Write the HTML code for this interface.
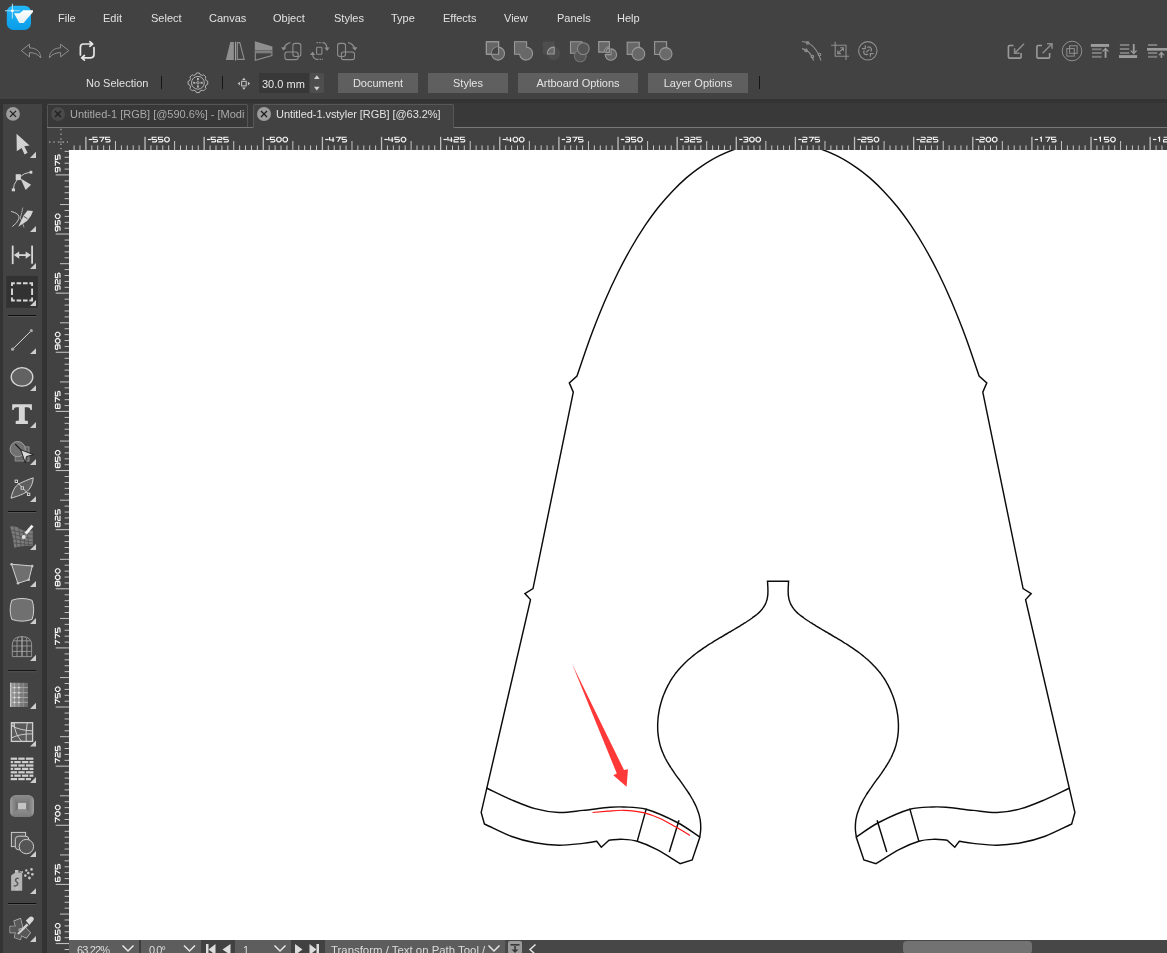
<!DOCTYPE html>
<html><head><meta charset="utf-8">
<style>
*{margin:0;padding:0;box-sizing:border-box}
html,body{width:1167px;height:953px;overflow:hidden;background:#424242;font-family:"Liberation Sans",sans-serif;color:#dedede}
.a{position:absolute}
.m{will-change:transform;position:absolute;top:11px;font-size:11px;line-height:14px;color:#e2e2e2;white-space:nowrap}
.btn{will-change:transform;position:absolute;top:73px;height:20px;background:#5f5f5f;color:#e4e4e4;font-size:11px;line-height:20px;text-align:center;white-space:nowrap}
.sep{position:absolute;top:76px;width:1px;height:13px;background:#151515}
svg{position:absolute;overflow:visible}
</style></head><body>
<!-- menu -->
<div class="a" style="left:0;top:0;width:1167px;height:99px;background:#424242"></div>
<div class="m" style="left:58px">File</div>
<div class="m" style="left:103px">Edit</div>
<div class="m" style="left:151px">Select</div>
<div class="m" style="left:209px">Canvas</div>
<div class="m" style="left:273px">Object</div>
<div class="m" style="left:334px">Styles</div>
<div class="m" style="left:391px">Type</div>
<div class="m" style="left:443px">Effects</div>
<div class="m" style="left:504px">View</div>
<div class="m" style="left:557px">Panels</div>
<div class="m" style="left:617px">Help</div>

<!-- control bar -->
<div class="m" style="left:86px;top:76px">No Selection</div>
<div class="sep" style="left:161px"></div>
<div class="sep" style="left:222px"></div>
<div class="a" style="left:259px;top:73px;width:50px;height:20px;background:#383838"></div>
<div class="m" style="left:262px;top:77px;color:#e6e6e6">30.0 mm</div>
<div class="a" style="left:310px;top:73px;width:14px;height:20px;background:#4e4e4e;border-radius:2px"></div>
<div class="btn" style="left:338px;width:80px">Document</div>
<div class="btn" style="left:428px;width:80px">Styles</div>
<div class="btn" style="left:518px;width:120px">Artboard Options</div>
<div class="btn" style="left:648px;width:100px">Layer Options</div>
<div class="sep" style="left:759px"></div>

<svg class="a" style="left:0;top:0" width="1167" height="100" viewBox="0 0 1167 100">
<!-- logo -->
<defs>
 <linearGradient id="lg1" x1="0" y1="0" x2="0" y2="1"><stop offset="0" stop-color="#22b8fb"/><stop offset="1" stop-color="#0a9ce8"/></linearGradient>
 <linearGradient id="lg2" x1="0" y1="0" x2="0" y2="1"><stop offset="0" stop-color="#ffffff"/><stop offset="1" stop-color="#e4eef4"/></linearGradient>
</defs>
<rect x="6.8" y="5.7" width="24.2" height="24.3" rx="6.5" fill="url(#lg1)"/>
<path d="M14,13.2 L19.6,13.2 L23.2,10.2 L33,10.2 L33,12 L23.5,23 L19.3,23 Z" fill="url(#lg2)"/>
<path d="M12.4,3.8 L12.4,18.6 M5,10.8 L19.8,10.8" stroke="#a8dcf5" stroke-width="1.1"/>
<circle cx="12.4" cy="10.8" r="1.4" fill="#fff"/>
<!-- undo/redo -->
<g fill="none" stroke="#8e8e8e" stroke-width="1" stroke-linejoin="round">
 <path d="M21.3,50.6 L29.5,44.2 L29.5,47.9 C35.5,47.9 40.5,51 40.8,58 C38.5,54.5 34.5,52.6 29.5,52.6 L29.5,56.9 Z"/>
 <path d="M68.8,50.6 L60.6,44.2 L60.6,47.9 C54.6,47.9 49.6,51 49.3,58 C51.6,54.5 55.6,52.6 60.6,52.6 L60.6,56.9 Z"/>
</g>
<g fill="none" stroke="#e6e6e6" stroke-width="1.7" stroke-linecap="round" stroke-linejoin="round">
 <path d="M80.4,55 L80.4,47.2 Q80.4,44 83.6,44 L92.6,44 M89.8,41.7 L92.6,44 L89.8,46.3"/>
 <path d="M94,47.5 L94,54.6 Q94,57.8 90.8,57.8 L81.6,57.8 M84.4,55.5 L81.6,57.8 L84.4,60.1"/>
</g>
<!-- flip group -->
<g fill="#8f8f8f">
 <path d="M225.8,59.9 L230.3,42.1 L233.9,42.1 L233.9,59.9 Z"/>
 <rect x="235" y="41.8" width="1.1" height="18.8" fill="#a0a0a0"/>
 <path d="M254.8,41.2 L272.4,46.4 L272.4,50 L254.8,50 Z"/>
 <rect x="254.6" y="50.6" width="18" height="1.1" fill="#a0a0a0"/>
</g>
<g fill="none" stroke="#8f8f8f" stroke-width="1.1">
 <path d="M237.3,42.6 L239.8,42.6 L244.2,59.4 L237.3,59.4 Z"/>
 <path d="M255.3,52.8 L271.9,52.8 L271.9,55.5 L255.3,60.2 Z"/>
 <rect x="292.9" y="43.4" width="7.9" height="13.1" rx="2.2"/>
 <rect x="284.9" y="52" width="13.2" height="7.6" rx="2.2"/>
 <path d="M290.5,42.6 Q286,43.3 283.8,48.2"/>
 <rect x="316.6" y="47.2" width="5.3" height="7.1" rx="0.8"/>
 <path d="M316.5,42.6 L322.5,42.6" stroke-dasharray="1.6,1"/>
 <path d="M323,42.6 Q326.5,43 327,48"/>
 <path d="M317,59.4 L323,59.4" stroke-dasharray="1.6,1"/>
 <path d="M317,59.4 Q313,59 312.6,54.5"/>
 <rect x="337.6" y="43.4" width="7.9" height="13.1" rx="2.2"/>
 <rect x="341.3" y="52" width="13.2" height="7.6" rx="2.2"/>
 <path d="M348,42.6 Q352.5,43.3 354.8,48.2"/>
</g>
<g fill="#8f8f8f">
 <path d="M281.2,47.2 L286.6,47.6 L283.4,50.6 Z"/>
 <path d="M324.4,47.6 L329.6,47.6 L327,51 Z"/>
 <path d="M310,55 L315.2,55 L312.6,51.6 Z"/>
 <path d="M352,47.6 L357.4,47.2 L355.2,50.6 Z"/>
</g>
<!-- boolean group -->
<g stroke="#9a9a9a" stroke-width="1.1">
 <!-- 1 xor -->
 <path d="M486.4,41.7 L498.6,41.7 L498.6,54.2 L486.4,54.2 Z" fill="#656565"/>
 <circle cx="498" cy="53.6" r="6.5" fill="#656565"/>
 <path d="M491.6,54.2 A6.5,6.5 0 0 1 498.6,47.1 L498.6,54.2 Z" fill="#454545" stroke="none"/>
 <path d="M486.4,41.7 L498.6,41.7 L498.6,54.2 L486.4,54.2 Z" fill="none"/>
 <!-- 2 union -->
 <path d="M514.5,41.7 L526.6,41.7 L526.6,47.1 A6.5,6.5 0 1 1 519.6,54.2 L514.5,54.2 Z" fill="#686868"/>
 <!-- 3 intersect -->
 <rect x="542.8" y="41.5" width="11.8" height="12.8" fill="#4e4e4e" stroke="none"/>
 <circle cx="553.8" cy="53.6" r="6.6" fill="#4c4c4c" stroke="none"/>
 <path d="M547.3,54 A6.5,6.5 0 0 1 554.2,47.1 L554.2,54 Z" fill="#666"/>
 <!-- 4 -->
 <path d="M570.5,41.7 L582,41.7 L582,53.2 L570.5,53.2 Z" fill="#686868"/>
 <circle cx="580.3" cy="55.9" r="5.9" fill="#555" stroke="#747474"/>
 <circle cx="583.3" cy="48.6" r="5.9" fill="#555" stroke="#8a8a8a"/>
 <!-- 5 -->
 <path d="M598.7,41.6 L609.4,41.6 L609.4,46.5 A5.6,5.6 0 0 0 604.3,52.1 L598.7,52.1 Z" fill="#686868"/>
 <path d="M605.8,52.6 A5,5 0 0 1 609.4,47.6 L609.4,52.6 Z" fill="#666"/>
 <path d="M611,48.9 A5.7,5.7 0 1 1 605.2,54.6 L611,54.6 Z" fill="#666"/>
 <!-- 6 -->
 <rect x="627.2" y="42.2" width="12.1" height="12.2" fill="#686868"/>
 <circle cx="638.4" cy="53.8" r="6.4" fill="#686868"/>
 <!-- 7 -->
 <rect x="654.6" y="41.7" width="12" height="12.7" fill="#555"/>
 <circle cx="665.8" cy="53.8" r="6.2" fill="#6a6a6a"/>
</g>
<!-- right group a,b,c -->
<g fill="none" stroke="#8f8f8f" stroke-width="1.1">
 <path d="M802,41.5 Q815,42.5 821,60.5"/>
 <path d="M802,48.6 Q810,50 813.6,60.5"/>
 <circle cx="807.6" cy="42.8" r="1.3"/><circle cx="819.5" cy="54.5" r="1.3"/>
 <circle cx="806" cy="50.4" r="1.3"/><circle cx="812.4" cy="56.5" r="1.3"/>
 <path d="M831.2,45.2 L835.2,45.2 L835.2,41.8 M835.2,45 L835.2,56.2 L849,56.2 M846,56.2 L846,60 M835.2,45.2 L846,45.2 L846,56"/>
 <path d="M837.8,53.6 L843.4,47.8 M840.2,47.8 L843.4,47.8 L843.4,51 M837.8,50.4 L837.8,53.6 L841,53.6"/>
 <circle cx="867.8" cy="50.8" r="9.2"/>
 <path d="M865.3,45.3 L865.3,48.6 L862,48.6 M873.6,53.6 L870.4,53.6 L870.4,56.8" stroke-width="1.2"/>
 <path d="M867.2,47.6 A2.5,2.5 0 1 1 870.6,51.4" stroke-width="1.2"/>
 <path d="M864.4,50.4 A2.5,2.5 0 1 0 868.2,53.8" stroke-width="1.2"/>
 <path d="M866.2,52.2 L869.4,49.4" stroke-width="1.2"/>
</g>
<!-- far right group -->
<g fill="none" stroke="#9a9a9a" stroke-width="1.6">
 <path d="M1013.5,45.5 L1009.6,45.5 Q1008.4,45.5 1008.4,46.7 L1008.4,56.9 Q1008.4,58.1 1009.6,58.1 L1019.9,58.1 Q1021.1,58.1 1021.1,56.9 L1021.1,53"/>
 <path d="M1024,43.8 L1014.6,53.2 M1014.6,48.2 L1014.6,53.2 L1019.6,53.2" stroke="#8a8a8a"/>
 <path d="M1042,45.5 L1038.1,45.5 Q1036.9,45.5 1036.9,46.7 L1036.9,56.9 Q1036.9,58.1 1038.1,58.1 L1048.4,58.1 Q1049.6,58.1 1049.6,56.9 L1049.6,53"/>
 <path d="M1042.6,53.2 L1052,43.8 M1047,43.8 L1052,43.8 L1052,48.8" stroke="#8a8a8a"/>
</g>
<g fill="none" stroke="#8f8f8f" stroke-width="1">
 <circle cx="1072" cy="51" r="9.8"/>
 <rect x="1069.6" y="45.8" width="7.5" height="7.5"/>
 <rect x="1066.8" y="48.6" width="7.5" height="7.5"/>
</g>
<g fill="#8f8f8f">
 <rect x="1090.8" y="44" width="18.3" height="2.9" fill="#9c9c9c"/>
 <rect x="1091.9" y="48.3" width="9.7" height="2" fill="#7c7c7c"/><rect x="1091.9" y="52" width="9.7" height="2" fill="#7c7c7c"/><rect x="1091.9" y="55.8" width="9.7" height="2" fill="#7c7c7c"/>
 <rect x="1104.6" y="49" width="1.9" height="8.8" fill="#9c9c9c"/><path d="M1101.8,51.4 L1105.5,47.4 L1109.2,51.4 L1107.6,51.4 L1105.5,49.4 L1103.4,51.4 Z" fill="#9c9c9c"/>
 <rect x="1119.9" y="44" width="9.4" height="2" fill="#7c7c7c"/><rect x="1119.9" y="48" width="9.4" height="2" fill="#7c7c7c"/><rect x="1119.9" y="52" width="9.4" height="2" fill="#7c7c7c"/>
 <rect x="1119" y="55.1" width="18.1" height="2.9" fill="#9c9c9c"/>
 <rect x="1132.8" y="44" width="1.9" height="8.5" fill="#9c9c9c"/><path d="M1130,50.4 L1133.7,54.4 L1137.4,50.4 L1135.8,50.4 L1133.7,52.4 L1131.6,50.4 Z" fill="#9c9c9c"/>
 <rect x="1148" y="44" width="9.2" height="2" fill="#7c7c7c"/>
 <rect x="1147" y="48" width="20" height="2.7" fill="#9c9c9c"/>
 <rect x="1148" y="52" width="9.2" height="2" fill="#7c7c7c"/><rect x="1148" y="55.8" width="9.2" height="2" fill="#7c7c7c"/>
 <rect x="1160.5" y="52.5" width="1.8" height="5.3" fill="#9c9c9c"/><path d="M1158.2,55.2 L1161.4,51.4 L1164.8,55.2 L1163.2,55.2 L1161.4,53.4 L1159.8,55.2 Z" fill="#9c9c9c"/>
</g>
<!-- control bar icons -->
<g fill="none" stroke="#b4b4b4" stroke-width="1">
 <path d="M206.1,80.6 L207.7,81.3 L207.7,84.3 L206.1,85.0 L205.3,87.0 L205.9,88.6 L203.7,90.8 L202.2,90.2 L200.1,91.0 L199.4,92.6 L196.4,92.6 L195.7,91.0 L193.7,90.2 L192.1,90.8 L189.9,88.6 L190.5,87.0 L189.7,85.0 L188.1,84.3 L188.1,81.3 L189.7,80.6 L190.5,78.5 L189.9,77.0 L192.1,74.8 L193.7,75.4 L195.7,74.6 L196.4,73.0 L199.4,73.0 L200.1,74.6 L202.2,75.4 L203.7,74.8 L205.9,77.0 L205.3,78.5 Z" stroke-linejoin="round"/>
 <circle cx="197.9" cy="82.8" r="6.4"/>
 <circle cx="197.9" cy="82.8" r="1.2"/>
</g>
<g fill="#b8b8b8">
 <rect x="197" y="78" width="1.8" height="2.2"/><rect x="197" y="85.4" width="1.8" height="2.2"/>
 <rect x="193.1" y="81.9" width="2.2" height="1.8"/><rect x="200.5" y="81.9" width="2.2" height="1.8"/>
</g>
<g fill="none" stroke="#bdbdbd" stroke-width="1.1"><rect x="241.6" y="81.3" width="4.6" height="4.6"/></g>
<g fill="#c8c8c8">
 <path d="M243.9,77.8 L242.1,79.9 L245.7,79.9 Z"/><path d="M243.9,89.8 L242.1,87.4 L245.7,87.4 Z"/>
 <path d="M237.7,83.6 L239.9,81.8 L239.9,85.4 Z"/><path d="M250.1,83.6 L247.9,81.8 L247.9,85.4 Z"/>
</g>
<g fill="#d2d2d2">
 <path d="M316.8,75.3 L314,79 L319.6,79 Z"/><path d="M316.8,90.5 L314,86.8 L319.6,86.8 Z"/>
</g>
</svg>

<!-- dark band & frames -->
<div class="a" style="left:0;top:99px;width:1167px;height:5px;background:#333"></div>
<div class="a" style="left:0;top:99px;width:3px;height:854px;background:#333"></div>
<div class="a" style="left:3px;top:104px;width:39px;height:849px;background:#434343"></div>
<div class="a" style="left:42px;top:99px;width:5px;height:854px;background:#333"></div>

<svg class="a" style="left:0;top:0" width="45" height="953" viewBox="0 0 45 953">
<defs>
 <radialGradient id="gm" cx="0.5" cy="0.5" r="0.7"><stop offset="0" stop-color="#9a9a9a"/><stop offset="1" stop-color="#7a7a7a"/></radialGradient>
 <pattern id="gmp" x="10.1" y="682.6" width="4.5" height="4.8" patternUnits="userSpaceOnUse"><rect width="4.5" height="4.8" fill="#858585"/><circle cx="2.2" cy="2.4" r="1.3" fill="#b2b2b2"/></pattern>
 <linearGradient id="bev" x1="0" y1="0" x2="1" y2="1"><stop offset="0" stop-color="#8c8c8c"/><stop offset="0.5" stop-color="#6c6c6c"/><stop offset="1" stop-color="#8a8a8a"/></linearGradient>
</defs>
<!-- close button -->
<circle cx="13" cy="113.9" r="6.9" fill="#9c9c9c"/>
<path d="M10,110.9 L16,116.9 M16,110.9 L10,116.9" stroke="#1e1e1e" stroke-width="1.3"/>
<!-- active tool bg -->
<rect x="6.3" y="275.9" width="31.5" height="31.9" fill="#323232"/>
<!-- separators -->
<g><rect x="8" y="315" width="28.2" height="1.1" fill="#0e0e0e"/><rect x="8" y="316.1" width="28.2" height="0.9" fill="#5a5a5a"/>
<rect x="8" y="511" width="28.2" height="1.1" fill="#0e0e0e"/><rect x="8" y="512.1" width="28.2" height="0.9" fill="#5a5a5a"/>
<rect x="8" y="670.2" width="28.2" height="1.1" fill="#0e0e0e"/><rect x="8" y="671.3" width="28.2" height="0.9" fill="#5a5a5a"/>
<rect x="8" y="903" width="28.2" height="1.1" fill="#0e0e0e"/><rect x="8" y="904.1" width="28.2" height="0.9" fill="#5a5a5a"/></g>
<!-- submenu triangles -->
<g fill="#cdcdcd">
 <path d="M36,151.8 L36,157.9 L29.9,157.9 Z"/>
 <path d="M36,226 L36,232 L30,232 Z"/>
 <path d="M36,263 L36,269 L30,269 Z"/>
 <path d="M36,299.9 L36,306 L30,306 Z"/>
 <path d="M36,348.2 L36,354.1 L30,354.1 Z"/>
 <path d="M36,385.2 L36,391 L30,391 Z"/>
 <path d="M36,422 L36,428 L30,428 Z"/>
 <path d="M36,459 L36,465 L30,465 Z"/>
 <path d="M36,496.3 L36,502 L30,502 Z"/>
 <path d="M36,544 L36,550 L30,550 Z"/>
 <path d="M36,581 L36,587 L30,587 Z"/>
 <path d="M36,617.9 L36,624 L30,624 Z"/>
 <path d="M36,654.8 L36,661 L30,661 Z"/>
 <path d="M36,702.8 L36,709 L30,709 Z"/>
 <path d="M36,740.6 L36,746.5 L30,746.5 Z"/>
 <path d="M36,777 L36,783 L30,783 Z"/>
 <path d="M36,851.1 L36,857 L30,857 Z"/>
 <path d="M36,888.3 L36,894 L30,894 Z"/>
 <path d="M36,936.1 L36,942 L30,942 Z"/>
</g>
<!-- select arrow -->
<path d="M16.5,133.7 L29.6,145.4 L24.3,146.3 L27.6,152.8 L24.6,154.5 L21.6,148 L16.8,151.2 Z" fill="#d2d2d2"/>
<!-- node tool -->
<g fill="#d2d2d2">
 <rect x="15.7" y="174.2" width="5.2" height="5.9"/>
 <rect x="29.6" y="170.8" width="2.7" height="2.9"/>
 <rect x="11.8" y="188.4" width="3.2" height="2.9"/>
 <path d="M20.6,178.6 L31.1,184.8 L25.6,189.9 Z"/>
</g>
<g fill="none" stroke="#d2d2d2" stroke-width="0.9">
 <path d="M20.5,176.5 Q24,173 30,172.3"/>
 <path d="M17,180 Q13.5,184 13.4,189"/>
</g>
<!-- knife/pen -->
<g fill="none" stroke="#d0d0d0" stroke-width="0.9">
 <path d="M11,211.4 Q20,213.5 19,218.5 Q17.5,223 12.2,226.7"/>
 <path d="M22.8,207.5 Q22,213 20.2,218 Q23,222.5 24,227.5" stroke="#a8a8a8"/>
</g>
<path d="M23.6,215.5 L27.5,210.6 L33,211 L31,215.8 L27,221 L18.3,226.7 Z" fill="#d4d4d4"/>
<path d="M23.6,216.2 L27.5,218.8" stroke="#444" stroke-width="0.9"/>
<!-- measure -->
<g fill="#d6d6d6">
 <rect x="11.8" y="245.6" width="1.8" height="18.5"/>
 <rect x="31.2" y="245.6" width="1.8" height="18.1"/>
 <rect x="16" y="254.2" width="12" height="1.8"/>
 <path d="M13.8,255.1 L19.2,251.4 L19.2,258.8 Z"/>
 <path d="M31,255.1 L25.6,251.4 L25.6,258.8 Z"/>
</g>
<!-- rect select -->
<g fill="none" stroke="#d8d8d8" stroke-width="1.9">
 <path d="M12,286 L12,283.2 L14.8,283.2"/>
 <path d="M16.6,283.2 L21.2,283.2 M23,283.2 L27.6,283.2"/>
 <path d="M29.4,283.2 L32.1,283.2 L32.1,286"/>
 <path d="M12,288.6 L12,294.9 M32.1,288.6 L32.1,294.9"/>
 <path d="M12,297.6 L12,300.5 L14.8,300.5"/>
 <path d="M16.6,300.5 L21.2,300.5 M23,300.5 L27.6,300.5"/>
 <path d="M29.4,300.5 L32.1,300.5 L32.1,297.6"/>
</g>
<!-- line tool -->
<path d="M12.6,349.2 L31.3,330.7" stroke="#dadada" stroke-width="1"/>
<circle cx="12.6" cy="349.2" r="1.6" fill="#a8a8a8"/><circle cx="31.3" cy="330.7" r="1.6" fill="#a8a8a8"/>
<!-- ellipse -->
<ellipse cx="22" cy="376.9" rx="10.8" ry="9.2" fill="#626262" stroke="#d8d8d8" stroke-width="1.3"/>
<!-- Text T -->
<path d="M12.2,404.3 L31.9,404.3 L31.9,410 L30.6,410 Q30,407.5 28,407.3 L24.8,407.3 L24.8,420.6 L27.9,421 L27.9,424 L15.7,424 L15.7,421 L18.9,420.6 L18.9,407.3 L16,407.3 Q14,407.5 13.5,410 L12.2,410 Z" fill="#d6d6d6"/>
<!-- shape builder -->
<rect x="15.2" y="446.8" width="13.8" height="14.2" fill="#666" stroke="#8e8e8e" stroke-width="1"/>
<circle cx="17.7" cy="449.1" r="7.6" fill="#717171" stroke="#9e9e9e" stroke-width="1"/>
<path d="M15.2,444 L21.6,450.6" stroke="#1a1a1a" stroke-width="1.1"/><path d="M20.8,449.8 L33.4,454.6 L26.4,456.6 L25.4,463 Z" fill="#d8d8d8" stroke="#1a1a1a" stroke-width="0.9" stroke-linejoin="round"/>
<!-- node path leaf -->
<path d="M11,498.2 C12.6,490.5 15.5,485.6 19.1,483.8 C23,481.8 28.2,479.5 33.2,477.8 C33,483.5 30,489.6 26.1,492.2 C23,494.2 19,495.8 11,498.2 Z" fill="#5e5e5e" stroke="#d0d0d0" stroke-width="1"/>
<path d="M16.3,481.3 L28.6,494.3" stroke="#d0d0d0" stroke-width="0.9"/>
<g fill="#3a3a3a" stroke="#e0e0e0" stroke-width="0.9">
 <rect x="15.1" y="480.1" width="2.4" height="2.4"/><rect x="21.1" y="486.8" width="2.4" height="2.4"/><rect x="27.4" y="493.1" width="2.4" height="2.4"/>
</g>
<!-- mesh knife -->
<path d="M10.2,526.4 Q16,525.5 21,529.5 Q26,532.5 32.8,530.5 L32.8,545.8 Q26,545.5 20,546.5 Q16,547.5 14.2,547.8 Q13.5,538 10.2,526.4 Z" fill="#7a7a7a"/>
<g stroke="#4a4a4a" stroke-width="0.7" fill="none">
 <path d="M11,530 Q20,532.5 32.5,534.5 M12,534 Q22,537 32.5,538.5 M13,538.5 Q22,540.5 32.5,542.2 M13.6,543 Q22,543.8 32.5,544.8 M14,527 Q16,537 17,547 M18.5,527.5 Q20.5,537 21,546.5 M23,530.5 Q24.5,538 25,546 M27.5,532 Q28,539 28.6,545.6"/>
</g>
<path d="M24.6,532.8 L31.4,524.8 L33.6,526.6 L26.9,534.6 Z" fill="#eeeeee"/>
<circle cx="23.8" cy="537" r="1.9" fill="#e4e4e4"/>
<!-- perspective quad -->
<path d="M11.5,564.2 L32.3,566 L28.8,579.8 L17.9,583.3 Z" fill="#6f6f6f" stroke="#d0d0d0" stroke-width="1"/>
<g fill="#c8c8c8"><circle cx="11.6" cy="564.3" r="1.3"/><circle cx="32.2" cy="566.1" r="1.3"/><circle cx="28.7" cy="579.7" r="1.3"/><circle cx="18" cy="583.2" r="1.3"/></g>
<!-- rounded bulge square -->
<path d="M11.8,600.3 Q22,596.6 32.1,600.3 Q35.3,610 32.1,619.4 Q22,622.9 11.8,619.4 Q8.5,610 11.8,600.3 Z" fill="#707070" stroke="#cfcfcf" stroke-width="1"/>
<!-- envelope mesh -->
<g fill="none" stroke="#9c9c9c" stroke-width="0.9">
 <path d="M12.3,656.6 L12.3,645 Q12.3,636.6 22,636.6 Q31.6,636.6 31.6,645 L31.6,656.6 Z"/>
 <path d="M12.3,646 L31.6,646 M12.3,651.4 L31.6,651.4 M13.5,640.8 L30.4,640.8"/>
 <path d="M17,656.6 L17,641 Q17,637.8 19,637 M26.9,656.6 L26.9,641 Q26.9,637.8 25,637"/>
 <path d="M22,636.6 L22,656.6" stroke="#b0b0b0" stroke-width="1.2"/>
</g>
<!-- gradient mesh -->
<defs><linearGradient id="gmg" x1="0" y1="0" x2="1" y2="0"><stop offset="0" stop-color="#9a9a9a"/><stop offset="1" stop-color="#686868"/></linearGradient></defs>
<rect x="10" y="682.8" width="18" height="24.2" fill="url(#gmg)"/>
<rect x="10" y="682.8" width="1.2" height="24.2" fill="#cfcfcf"/>
<g fill="#b4b4b4" opacity="0.75">
 <rect x="14" y="682.8" width="1" height="24.2"/><rect x="18.4" y="682.8" width="1" height="24.2"/><rect x="22.8" y="682.8" width="1" height="24.2" opacity="0.6"/>
 <rect x="10" y="687.1" width="18" height="1"/><rect x="10" y="692.2" width="18" height="1"/><rect x="10" y="697" width="18" height="1"/><rect x="10" y="701.8" width="18" height="1"/>
</g>
<g fill="#e6e6e6"><circle cx="14.5" cy="687.6" r="0.9"/><circle cx="18.9" cy="687.6" r="0.9"/><circle cx="14.5" cy="692.7" r="0.9"/><circle cx="18.9" cy="692.7" r="0.9"/><circle cx="14.5" cy="697.5" r="0.9"/><circle cx="18.9" cy="697.5" r="0.9"/><circle cx="14.5" cy="702.3" r="0.9"/><circle cx="18.9" cy="702.3" r="0.9"/></g>
<!-- warp grid -->
<rect x="11.4" y="722.7" width="21.2" height="18.7" fill="#5a5a5a" stroke="#d0d0d0" stroke-width="1.3"/>
<g fill="none" stroke="#d0d0d0" stroke-width="0.95">
 <path d="M14.1,722.7 Q14.5,734 21.8,741.4"/>
 <path d="M11.6,725.8 Q20,730.4 32.6,730.9"/>
 <path d="M11.5,737.9 Q20,733.6 32.6,733.9"/>
 <path d="M27.3,722.7 Q25.6,732 26.2,741.4"/>
 <rect x="11.8" y="723.1" width="2.4" height="2.4" rx="0.8"/>
</g>
<!-- bricks -->
<g fill="#d0d0d0">
 <rect x="10.7" y="757.6" width="6.4" height="2.2"/><rect x="18.3" y="757.6" width="6.4" height="2.2"/><rect x="25.9" y="757.6" width="7.5" height="2.2"/>
 <rect x="10.7" y="761" width="2.4" height="2.2"/><rect x="14.3" y="761" width="6.4" height="2.2"/><rect x="21.9" y="761" width="6.4" height="2.2"/><rect x="29.5" y="761" width="3.9" height="2.2"/>
 <rect x="10.7" y="764.4" width="6.4" height="2.2"/><rect x="18.3" y="764.4" width="6.4" height="2.2"/><rect x="25.9" y="764.4" width="7.5" height="2.2"/>
 <rect x="10.7" y="767.8" width="2.4" height="2.2"/><rect x="14.3" y="767.8" width="6.4" height="2.2"/><rect x="21.9" y="767.8" width="6.4" height="2.2"/><rect x="29.5" y="767.8" width="3.9" height="2.2"/>
 <rect x="10.7" y="771.2" width="6.4" height="2.2"/><rect x="18.3" y="771.2" width="6.4" height="2.2"/><rect x="25.9" y="771.2" width="7.5" height="2.2"/>
 <rect x="10.7" y="774.6" width="2.4" height="2.2"/><rect x="14.3" y="774.6" width="6.4" height="2.2"/><rect x="21.9" y="774.6" width="6.4" height="2.2"/><rect x="29.5" y="774.6" width="3.9" height="2.2"/>
 <rect x="10.7" y="778" width="6.4" height="2.2"/><rect x="18.3" y="778" width="6.4" height="2.2"/><rect x="25.9" y="778" width="5" height="2.2"/>
</g>
<!-- bevel -->
<defs>
 <clipPath id="bvc"><rect x="10.1" y="795.1" width="23.9" height="22" rx="5.5"/></clipPath>
 <linearGradient id="bvt" x1="0" y1="0" x2="0" y2="1"><stop offset="0" stop-color="#8e8e8e"/><stop offset="1" stop-color="#7a7a7a"/></linearGradient>
 <linearGradient id="bvl" x1="0" y1="0" x2="1" y2="0"><stop offset="0" stop-color="#a4a4a4"/><stop offset="1" stop-color="#6c6c6c"/></linearGradient>
 <linearGradient id="bvr" x1="1" y1="0" x2="0" y2="0"><stop offset="0" stop-color="#a4a4a4"/><stop offset="1" stop-color="#6c6c6c"/></linearGradient>
</defs>
<g clip-path="url(#bvc)">
 <path d="M9,794 L35,794 L26.3,802.9 L17.9,802.9 Z" fill="url(#bvt)"/>
 <path d="M9,818 L35,818 L26.3,809.1 L17.9,809.1 Z" fill="url(#bvt)"/>
 <path d="M9,794 L17.9,802.9 L17.9,809.1 L9,818 Z" fill="url(#bvl)"/>
 <path d="M35,794 L26.3,802.9 L26.3,809.1 L35,818 Z" fill="url(#bvr)"/>
 <path d="M11,796 L17.9,802.9 M33,796 L26.3,802.9 M11,816 L17.9,809.1 M33,816 L26.3,809.1" stroke="#9a9a9a" stroke-width="0.6" opacity="0.7"/>
</g>
<rect x="17.9" y="802.9" width="8.4" height="6.2" fill="#c4c4c4"/>
<!-- blend shapes -->
<g stroke="#cdcdcd" stroke-width="1" fill="#555">
 <rect x="11.4" y="832.4" width="14.2" height="14.2"/>
 <rect x="15.3" y="836.2" width="13.6" height="13.6" rx="3.5"/>
 <circle cx="26.4" cy="846.6" r="7.2"/>
</g>
<!-- spray -->
<path d="M11.1,875.4 L15.2,872.6 L22.2,872.6 L22.2,890.8 L11.1,890.8 Z" fill="#b4b4b4"/>
<rect x="15" y="870" width="3.4" height="2.8" fill="#c0c0c0"/>
<rect x="15.5" y="876" width="3" height="14.5" fill="#c2c2c2" opacity="0.6"/>
<path d="M18.8,878.6 Q17,877.6 15.8,879.2 Q15,880.8 16.8,882 Q18.4,883.2 17.2,885 Q16,886.4 13.6,885.6" fill="none" stroke="#5a5a5a" stroke-width="1.5"/>
<g fill="#c4c4c4"><circle cx="26.3" cy="870.4" r="1.2"/><circle cx="31.5" cy="869.4" r="1.3"/><circle cx="28.3" cy="873" r="1.3"/><circle cx="32.4" cy="874.3" r="1.4"/><circle cx="25.3" cy="875.6" r="1.3"/><circle cx="29.4" cy="878" r="1.4"/><circle cx="22.2" cy="872" r="0.9"/><circle cx="20.2" cy="871.6" r="0.7"/></g>
<!-- eyedropper star -->
<g id="star"><path d="M14.1,921.2 L20.4,918.7 L22.6,927.6 L16.8,929.4 Z"/>
 <path d="M10.2,926.3 L18.5,926.3 L18.5,932.6 L10.2,932.6 Z"/>
 <path d="M14.5,937.4 L16.3,930.2 L22,931.6 L20.4,939.4 Z"/>
 <path d="M19.5,929.5 L25.2,927.6 L30.3,932.6 L26.3,937.8 L19.5,934.5 Z"/></g>
<use href="#star" fill="none" stroke="#c0c0c0" stroke-width="1.3" stroke-linejoin="round"/>
<use href="#star" fill="#585858"/>
<path d="M17.2,933.4 L26.6,923.4 L28.6,925.2 L18.8,934.6 Z" fill="#d2d2d2"/>
<path d="M25.8,920.6 L30,916.8 Q32.6,916 33.8,918.2 Q34.2,920 31.2,922.8 L29.5,925 Z" fill="#d8d8d8"/>
</svg>

<!-- tab strip -->
<div class="a" style="left:47px;top:103px;width:1120px;height:25px;background:#393939"></div>
<div class="a" style="left:47px;top:127px;width:1120px;height:1px;background:#777"></div>
<div class="a" style="left:47px;top:104px;width:201px;height:23px;background:#383838;border:1px solid #555;border-bottom:none;border-radius:2px 2px 0 0"></div>
<div class="a" style="left:51px;top:107px;width:14px;height:14px;border-radius:50%;background:#4a4a4a"></div>
<svg class="a" style="left:51px;top:107px" width="14" height="14"><path d="M4,4 L10,10 M10,4 L4,10" stroke="#1e1e1e" stroke-width="1.3"/></svg>
<div class="a" style="left:70px;top:107px;width:175px;height:16px;overflow:hidden;will-change:transform;font-size:11px;line-height:14px;color:#a9a9a9;white-space:nowrap">Untitled-1 [RGB] [@590.6%] - [Modified]</div>
<div class="a" style="left:253px;top:104px;width:201px;height:24px;background:#424242;border:1px solid #575757;border-bottom:none;border-radius:2px 2px 0 0"></div>
<div class="a" style="left:256.5px;top:107px;width:14px;height:14px;border-radius:50%;background:#9c9c9c"></div>
<svg class="a" style="left:256.5px;top:107px" width="14" height="14"><path d="M4,4 L10,10 M10,4 L4,10" stroke="#1e1e1e" stroke-width="1.3"/></svg>
<div class="a" style="will-change:transform;letter-spacing:-0.06px;left:276px;top:107px;font-size:11px;line-height:14px;color:#e2e2e2;white-space:nowrap">Untitled-1.vstyler [RGB] [@63.2%]</div>

<!-- rulers -->
<div class="a" style="left:47px;top:128px;width:1120px;height:22px;background:#424242"></div>
<div class="a" style="left:47px;top:150px;width:22px;height:803px;background:#424242"></div>

<!-- canvas -->
<div class="a" style="left:69px;top:150px;width:1098px;height:790px;background:#fff;overflow:hidden"><div class="a" style="left:-69px;top:-150px"><svg class="a" style="left:0;top:0" width="1167" height="953" viewBox="0 0 1167 953">
<g fill="none" stroke="#0c0c0c" stroke-width="1.45" stroke-linejoin="miter">
<path d="M778.0,141.7 C771.5,142.2 765.0,142.2 758.5,143.2 C752.0,144.3 745.5,145.7 739.0,147.8 C732.5,149.9 726.0,152.4 719.5,155.7 C713.0,158.9 705.5,163.6 700.0,167.3 C694.5,171.0 690.9,174.0 686.3,177.9 C681.8,181.9 677.2,186.2 672.7,190.9 C668.1,195.7 663.6,200.8 659.0,206.5 C654.4,212.2 649.9,218.4 645.3,225.1 C640.8,231.8 636.2,239.0 631.7,247.0 C627.1,254.9 622.6,263.3 618.0,272.5 C613.4,281.7 608.9,291.5 604.3,302.2 C599.8,312.9 595.2,324.2 590.7,336.5 C586.1,348.8 581.6,362.8 577.0,376.0 L569.3,382.9 L573.3,392.2 L533.0,588.6 L524.9,593.6 L530.5,599.6 L481.2,812.4 L484.4,824.0 C493.3,828.1 502.6,833.1 511.0,836.2 C519.4,839.3 527.0,841.3 535.0,842.8 C543.0,844.3 551.0,845.1 559.0,845.2 C567.0,845.3 576.7,844.0 583.0,843.4 C589.3,842.8 592.2,842.0 596.8,841.3 L601.3,847.2 L609.0,840.2 C613.2,839.9 617.0,839.1 621.7,839.3 C626.4,839.5 631.4,839.5 637.2,841.2 C643.0,842.9 649.5,845.6 656.6,849.4 C663.8,853.1 672.3,858.9 680.1,863.7 L692.2,860.0 L699.9,837.1 C699.8,836.0 700.1,834.7 700.3,833.5 C700.5,832.2 700.6,831.0 700.7,829.8 C700.7,828.6 700.8,827.4 700.7,826.2 C700.7,825.0 700.7,823.8 700.5,822.7 C700.4,821.5 700.3,820.4 700.1,819.2 C699.9,818.1 699.6,817.0 699.4,815.9 C699.1,814.8 698.8,813.7 698.4,812.6 C698.1,811.5 697.7,810.4 697.3,809.4 C696.9,808.3 696.5,807.2 696.0,806.2 C695.5,805.2 695.0,804.1 694.5,803.1 C694.0,802.1 693.4,801.0 692.9,800.0 C692.3,799.0 691.7,798.0 691.1,797.0 C690.5,796.0 689.9,795.0 689.3,794.0 C688.6,793.0 688.0,792.0 687.3,791.0 C686.6,790.0 686.0,789.0 685.3,788.1 C684.6,787.1 683.9,786.1 683.2,785.1 C682.5,784.1 681.8,783.2 681.1,782.2 C680.4,781.2 679.7,780.2 679.0,779.2 C678.3,778.3 677.5,777.3 676.8,776.3 C676.1,775.3 675.4,774.3 674.7,773.4 C674.1,772.4 673.4,771.4 672.7,770.4 C672.0,769.4 671.4,768.4 670.7,767.4 C670.1,766.4 669.4,765.4 668.8,764.3 C668.2,763.3 667.6,762.3 667.0,761.3 C666.4,760.2 665.8,759.2 665.3,758.2 C664.8,757.1 664.2,756.1 663.8,755.0 C663.3,753.9 662.8,752.8 662.4,751.8 C661.9,750.7 661.5,749.6 661.2,748.5 C660.8,747.4 660.4,746.2 660.1,745.1 C659.8,744.0 659.5,742.8 659.3,741.7 C659.0,740.6 658.8,739.4 658.6,738.2 C658.4,737.1 658.3,735.9 658.1,734.7 C658.0,733.6 657.9,732.4 657.8,731.2 C657.7,730.0 657.7,728.8 657.7,727.6 C657.6,726.5 657.7,725.3 657.7,724.1 C657.7,722.9 657.8,721.7 657.9,720.5 C657.9,719.3 658.1,718.1 658.2,716.9 C658.3,715.7 658.5,714.5 658.7,713.3 C658.9,712.1 659.1,710.9 659.3,709.8 C659.6,708.6 659.8,707.4 660.1,706.2 C660.4,705.0 660.7,703.9 661.0,702.7 C661.4,701.5 661.7,700.4 662.1,699.2 C662.5,698.1 662.9,696.9 663.3,695.8 C663.7,694.7 664.2,693.6 664.7,692.4 C665.1,691.3 665.6,690.2 666.1,689.1 C666.6,688.1 667.2,687.0 667.7,685.9 C668.3,684.8 668.8,683.8 669.4,682.8 C670.0,681.7 670.6,680.7 671.2,679.7 C671.9,678.7 672.5,677.7 673.2,676.7 C673.9,675.8 674.5,674.8 675.2,673.9 C675.9,672.9 676.7,672.0 677.4,671.1 C678.1,670.2 678.9,669.3 679.7,668.4 C680.4,667.6 681.2,666.7 682.0,665.9 C682.8,665.0 683.6,664.2 684.4,663.4 C685.3,662.6 686.1,661.8 687.0,661.0 C687.8,660.2 688.7,659.5 689.6,658.7 C690.5,657.9 691.3,657.2 692.2,656.5 C693.1,655.7 694.1,655.0 695.0,654.3 C695.9,653.6 696.8,652.9 697.8,652.2 C698.7,651.5 699.7,650.8 700.6,650.1 C701.6,649.4 702.6,648.8 703.5,648.1 C704.5,647.4 705.5,646.8 706.5,646.1 C707.5,645.5 708.5,644.9 709.5,644.2 C710.5,643.6 711.5,642.9 712.5,642.3 C713.5,641.7 714.5,641.1 715.5,640.4 C716.6,639.8 717.6,639.2 718.6,638.6 C719.6,638.0 720.7,637.4 721.7,636.8 C722.7,636.2 723.8,635.6 724.8,634.9 C725.8,634.3 726.9,633.7 727.9,633.1 C728.9,632.5 730.0,631.9 731.0,631.3 C732.0,630.7 733.1,630.1 734.1,629.5 C735.1,628.9 736.1,628.3 737.2,627.6 C738.2,627.0 739.2,626.4 740.2,625.8 C741.2,625.1 742.3,624.5 743.3,623.9 C744.3,623.3 745.3,622.6 746.3,622.0 C747.3,621.3 748.3,620.7 749.3,620.0 C750.2,619.4 751.2,618.7 752.2,618.0 C753.1,617.3 754.1,616.6 755.0,615.9 C755.9,615.2 756.8,614.5 757.7,613.7 C758.5,613.0 759.3,612.2 760.1,611.4 C760.9,610.6 761.6,609.7 762.3,608.9 C763.0,608.0 763.7,607.1 764.2,606.1 C764.8,605.2 765.3,604.2 765.8,603.1 C766.2,602.1 766.6,601.0 766.9,599.9 C767.3,598.7 767.5,597.5 767.6,596.3 C767.8,595.1 767.9,593.8 767.9,592.5 C768.0,591.2 767.9,589.9 767.9,588.6 C767.9,587.3 767.8,586.0 767.7,584.8 C767.7,583.6 767.6,582.5 767.5,581.3 L778.0,581.3"/><path d="M778.0,141.7 C784.6,142.2 791.1,142.2 797.6,143.2 C804.1,144.3 810.6,145.7 817.1,147.8 C823.6,149.9 830.1,152.4 836.6,155.7 C843.1,158.9 850.6,163.6 856.1,167.3 C861.6,171.0 865.2,174.0 869.8,177.9 C874.3,181.9 878.9,186.2 883.4,190.9 C888.0,195.7 892.5,200.8 897.1,206.5 C901.7,212.2 906.2,218.4 910.8,225.1 C915.3,231.8 919.9,239.0 924.4,247.0 C929.0,254.9 933.5,263.3 938.1,272.5 C942.7,281.7 947.2,291.5 951.8,302.2 C956.3,312.9 960.9,324.2 965.4,336.5 C970.0,348.8 974.5,362.8 979.1,376.0 L986.8,382.9 L982.8,392.2 L1023.1,588.6 L1031.2,593.6 L1025.6,599.6 L1074.9,812.4 L1071.7,824.0 C1062.8,828.1 1053.5,833.1 1045.1,836.2 C1036.7,839.3 1029.1,841.3 1021.1,842.8 C1013.1,844.3 1005.1,845.1 997.1,845.2 C989.1,845.3 979.4,844.0 973.1,843.4 C966.8,842.8 963.9,842.0 959.3,841.3 L954.8,847.2 L947.1,840.2 C942.9,839.9 939.1,839.1 934.4,839.3 C929.7,839.5 924.7,839.5 918.9,841.2 C913.1,842.9 906.6,845.6 899.5,849.4 C892.3,853.1 883.8,858.9 876.0,863.7 L863.9,860.0 L856.2,837.1 C856.3,836.0 856.0,834.7 855.8,833.5 C855.6,832.2 855.5,831.0 855.4,829.8 C855.4,828.6 855.3,827.4 855.4,826.2 C855.4,825.0 855.4,823.8 855.6,822.7 C855.7,821.5 855.8,820.4 856.0,819.2 C856.2,818.1 856.5,817.0 856.7,815.9 C857.0,814.8 857.3,813.7 857.7,812.6 C858.0,811.5 858.4,810.4 858.8,809.4 C859.2,808.3 859.6,807.2 860.1,806.2 C860.6,805.2 861.1,804.1 861.6,803.1 C862.1,802.1 862.7,801.0 863.2,800.0 C863.8,799.0 864.4,798.0 865.0,797.0 C865.6,796.0 866.2,795.0 866.8,794.0 C867.5,793.0 868.1,792.0 868.8,791.0 C869.5,790.0 870.1,789.0 870.8,788.1 C871.5,787.1 872.2,786.1 872.9,785.1 C873.6,784.1 874.3,783.2 875.0,782.2 C875.7,781.2 876.4,780.2 877.1,779.2 C877.8,778.3 878.6,777.3 879.3,776.3 C880.0,775.3 880.7,774.3 881.4,773.4 C882.0,772.4 882.7,771.4 883.4,770.4 C884.1,769.4 884.7,768.4 885.4,767.4 C886.0,766.4 886.7,765.4 887.3,764.3 C887.9,763.3 888.5,762.3 889.1,761.3 C889.7,760.2 890.3,759.2 890.8,758.2 C891.3,757.1 891.9,756.1 892.3,755.0 C892.8,753.9 893.3,752.8 893.7,751.8 C894.2,750.7 894.6,749.6 894.9,748.5 C895.3,747.4 895.7,746.2 896.0,745.1 C896.3,744.0 896.6,742.8 896.8,741.7 C897.1,740.6 897.3,739.4 897.5,738.2 C897.7,737.1 897.8,735.9 898.0,734.7 C898.1,733.6 898.2,732.4 898.3,731.2 C898.4,730.0 898.4,728.8 898.4,727.6 C898.5,726.5 898.4,725.3 898.4,724.1 C898.4,722.9 898.3,721.7 898.2,720.5 C898.2,719.3 898.0,718.1 897.9,716.9 C897.8,715.7 897.6,714.5 897.4,713.3 C897.2,712.1 897.0,710.9 896.8,709.8 C896.5,708.6 896.3,707.4 896.0,706.2 C895.7,705.0 895.4,703.9 895.1,702.7 C894.7,701.5 894.4,700.4 894.0,699.2 C893.6,698.1 893.2,696.9 892.8,695.8 C892.4,694.7 891.9,693.6 891.4,692.4 C891.0,691.3 890.5,690.2 890.0,689.1 C889.5,688.1 888.9,687.0 888.4,685.9 C887.8,684.8 887.3,683.8 886.7,682.8 C886.1,681.7 885.5,680.7 884.9,679.7 C884.2,678.7 883.6,677.7 882.9,676.7 C882.2,675.8 881.6,674.8 880.9,673.9 C880.2,672.9 879.4,672.0 878.7,671.1 C878.0,670.2 877.2,669.3 876.4,668.4 C875.7,667.6 874.9,666.7 874.1,665.9 C873.3,665.0 872.5,664.2 871.7,663.4 C870.8,662.6 870.0,661.8 869.1,661.0 C868.3,660.2 867.4,659.5 866.5,658.7 C865.6,657.9 864.8,657.2 863.9,656.5 C863.0,655.7 862.0,655.0 861.1,654.3 C860.2,653.6 859.3,652.9 858.3,652.2 C857.4,651.5 856.4,650.8 855.5,650.1 C854.5,649.4 853.5,648.8 852.6,648.1 C851.6,647.4 850.6,646.8 849.6,646.1 C848.6,645.5 847.6,644.9 846.6,644.2 C845.6,643.6 844.6,642.9 843.6,642.3 C842.6,641.7 841.6,641.1 840.6,640.4 C839.5,639.8 838.5,639.2 837.5,638.6 C836.5,638.0 835.4,637.4 834.4,636.8 C833.4,636.2 832.3,635.6 831.3,634.9 C830.3,634.3 829.2,633.7 828.2,633.1 C827.2,632.5 826.1,631.9 825.1,631.3 C824.1,630.7 823.0,630.1 822.0,629.5 C821.0,628.9 820.0,628.3 818.9,627.6 C817.9,627.0 816.9,626.4 815.9,625.8 C814.9,625.1 813.8,624.5 812.8,623.9 C811.8,623.3 810.8,622.6 809.8,622.0 C808.8,621.3 807.8,620.7 806.8,620.0 C805.9,619.4 804.9,618.7 803.9,618.0 C803.0,617.3 802.0,616.6 801.1,615.9 C800.2,615.2 799.3,614.5 798.4,613.7 C797.6,613.0 796.8,612.2 796.0,611.4 C795.2,610.6 794.5,609.7 793.8,608.9 C793.1,608.0 792.4,607.1 791.9,606.1 C791.3,605.2 790.8,604.2 790.3,603.1 C789.9,602.1 789.5,601.0 789.2,599.9 C788.8,598.7 788.6,597.5 788.5,596.3 C788.3,595.1 788.2,593.8 788.2,592.5 C788.1,591.2 788.2,589.9 788.2,588.6 C788.2,587.3 788.3,586.0 788.4,584.8 C788.4,583.6 788.5,582.5 788.6,581.3 L778.0,581.3"/><path d="M486.4,788.0 C494.6,791.9 502.9,796.2 511.0,799.6 C519.1,803.0 527.0,806.5 535.0,808.6 C543.0,810.8 551.0,812.2 559.0,812.5 C567.0,812.8 574.5,811.3 583.0,810.4 C591.5,809.5 603.2,807.9 610.0,807.3 C616.8,806.7 617.6,806.7 623.6,807.0 C629.6,807.3 637.2,806.7 646.2,809.3 C655.2,811.9 668.3,817.9 677.3,822.5 C686.2,827.1 692.4,832.2 699.9,837.1 M646.4,808.4 L637.2,841.4 M679.0,820.2 L669.3,852.0"/><path d="M1069.7,788.0 C1061.5,791.9 1053.2,796.2 1045.1,799.6 C1037.0,803.0 1029.1,806.5 1021.1,808.6 C1013.1,810.8 1005.1,812.2 997.1,812.5 C989.1,812.8 981.6,811.3 973.1,810.4 C964.6,809.5 952.9,807.9 946.1,807.3 C939.3,806.7 938.5,806.7 932.5,807.0 C926.5,807.3 918.8,806.7 909.9,809.3 C900.9,811.9 887.8,817.9 878.8,822.5 C869.8,827.1 863.7,832.2 856.2,837.1 M909.7,808.4 L918.9,841.4 M877.1,820.2 L886.8,852.0"/>
</g>
<path d="M592.6,812.5 C597.7,812.1 602.8,811.6 608.0,811.2 C613.2,810.8 617.7,810.1 623.6,810.3 C629.5,810.5 637.3,811.2 643.4,812.6 C649.5,814.0 654.7,816.1 660.0,818.5 C665.3,820.9 670.4,824.0 675.4,826.8 C680.4,829.6 685.1,832.5 690.0,835.4" fill="none" stroke="#ff1414" stroke-width="1.2"/>
<path d="M572.1,663.9 L624,770 L628,769.2 L626.6,786.8 L613.3,775.3 L616.8,773.5 Z" fill="#ff3838"/>
</svg></div></div>
<svg class="a" style="left:0;top:0" width="1167" height="953" viewBox="0 0 1167 953">
<rect x="73.58" y="145.4" width="1" height="4.6" fill="#c4c4c4"/><rect x="79.49" y="145.4" width="1" height="4.6" fill="#c4c4c4"/><rect x="85.25" y="136.8" width="1.3" height="13.2" fill="#bdbdbd"/><rect x="91.31" y="145.4" width="1" height="4.6" fill="#c4c4c4"/><rect x="97.23" y="145.4" width="1" height="4.6" fill="#c4c4c4"/><rect x="103.14" y="145.4" width="1" height="4.6" fill="#c4c4c4"/><rect x="109.05" y="145.4" width="1" height="4.6" fill="#c4c4c4"/><rect x="114.96" y="141" width="1" height="9" fill="#c4c4c4"/><rect x="120.88" y="145.4" width="1" height="4.6" fill="#c4c4c4"/><rect x="126.79" y="145.4" width="1" height="4.6" fill="#c4c4c4"/><rect x="132.70" y="145.4" width="1" height="4.6" fill="#c4c4c4"/><rect x="138.61" y="145.4" width="1" height="4.6" fill="#c4c4c4"/><rect x="144.38" y="136.8" width="1.3" height="13.2" fill="#bdbdbd"/><rect x="150.44" y="145.4" width="1" height="4.6" fill="#c4c4c4"/><rect x="156.35" y="145.4" width="1" height="4.6" fill="#c4c4c4"/><rect x="162.26" y="145.4" width="1" height="4.6" fill="#c4c4c4"/><rect x="168.18" y="145.4" width="1" height="4.6" fill="#c4c4c4"/><rect x="174.09" y="141" width="1" height="9" fill="#c4c4c4"/><rect x="180.00" y="145.4" width="1" height="4.6" fill="#c4c4c4"/><rect x="185.91" y="145.4" width="1" height="4.6" fill="#c4c4c4"/><rect x="191.83" y="145.4" width="1" height="4.6" fill="#c4c4c4"/><rect x="197.74" y="145.4" width="1" height="4.6" fill="#c4c4c4"/><rect x="203.50" y="136.8" width="1.3" height="13.2" fill="#bdbdbd"/><rect x="209.56" y="145.4" width="1" height="4.6" fill="#c4c4c4"/><rect x="215.48" y="145.4" width="1" height="4.6" fill="#c4c4c4"/><rect x="221.39" y="145.4" width="1" height="4.6" fill="#c4c4c4"/><rect x="227.30" y="145.4" width="1" height="4.6" fill="#c4c4c4"/><rect x="233.21" y="141" width="1" height="9" fill="#c4c4c4"/><rect x="239.13" y="145.4" width="1" height="4.6" fill="#c4c4c4"/><rect x="245.04" y="145.4" width="1" height="4.6" fill="#c4c4c4"/><rect x="250.95" y="145.4" width="1" height="4.6" fill="#c4c4c4"/><rect x="256.86" y="145.4" width="1" height="4.6" fill="#c4c4c4"/><rect x="262.63" y="136.8" width="1.3" height="13.2" fill="#bdbdbd"/><rect x="268.69" y="145.4" width="1" height="4.6" fill="#c4c4c4"/><rect x="274.60" y="145.4" width="1" height="4.6" fill="#c4c4c4"/><rect x="280.51" y="145.4" width="1" height="4.6" fill="#c4c4c4"/><rect x="286.43" y="145.4" width="1" height="4.6" fill="#c4c4c4"/><rect x="292.34" y="141" width="1" height="9" fill="#c4c4c4"/><rect x="298.25" y="145.4" width="1" height="4.6" fill="#c4c4c4"/><rect x="304.16" y="145.4" width="1" height="4.6" fill="#c4c4c4"/><rect x="310.08" y="145.4" width="1" height="4.6" fill="#c4c4c4"/><rect x="315.99" y="145.4" width="1" height="4.6" fill="#c4c4c4"/><rect x="321.75" y="136.8" width="1.3" height="13.2" fill="#bdbdbd"/><rect x="327.81" y="145.4" width="1" height="4.6" fill="#c4c4c4"/><rect x="333.73" y="145.4" width="1" height="4.6" fill="#c4c4c4"/><rect x="339.64" y="145.4" width="1" height="4.6" fill="#c4c4c4"/><rect x="345.55" y="145.4" width="1" height="4.6" fill="#c4c4c4"/><rect x="351.46" y="141" width="1" height="9" fill="#c4c4c4"/><rect x="357.38" y="145.4" width="1" height="4.6" fill="#c4c4c4"/><rect x="363.29" y="145.4" width="1" height="4.6" fill="#c4c4c4"/><rect x="369.20" y="145.4" width="1" height="4.6" fill="#c4c4c4"/><rect x="375.11" y="145.4" width="1" height="4.6" fill="#c4c4c4"/><rect x="380.88" y="136.8" width="1.3" height="13.2" fill="#bdbdbd"/><rect x="386.94" y="145.4" width="1" height="4.6" fill="#c4c4c4"/><rect x="392.85" y="145.4" width="1" height="4.6" fill="#c4c4c4"/><rect x="398.76" y="145.4" width="1" height="4.6" fill="#c4c4c4"/><rect x="404.68" y="145.4" width="1" height="4.6" fill="#c4c4c4"/><rect x="410.59" y="141" width="1" height="9" fill="#c4c4c4"/><rect x="416.50" y="145.4" width="1" height="4.6" fill="#c4c4c4"/><rect x="422.41" y="145.4" width="1" height="4.6" fill="#c4c4c4"/><rect x="428.33" y="145.4" width="1" height="4.6" fill="#c4c4c4"/><rect x="434.24" y="145.4" width="1" height="4.6" fill="#c4c4c4"/><rect x="440.00" y="136.8" width="1.3" height="13.2" fill="#bdbdbd"/><rect x="446.06" y="145.4" width="1" height="4.6" fill="#c4c4c4"/><rect x="451.98" y="145.4" width="1" height="4.6" fill="#c4c4c4"/><rect x="457.89" y="145.4" width="1" height="4.6" fill="#c4c4c4"/><rect x="463.80" y="145.4" width="1" height="4.6" fill="#c4c4c4"/><rect x="469.71" y="141" width="1" height="9" fill="#c4c4c4"/><rect x="475.62" y="145.4" width="1" height="4.6" fill="#c4c4c4"/><rect x="481.54" y="145.4" width="1" height="4.6" fill="#c4c4c4"/><rect x="487.45" y="145.4" width="1" height="4.6" fill="#c4c4c4"/><rect x="493.36" y="145.4" width="1" height="4.6" fill="#c4c4c4"/><rect x="499.13" y="136.8" width="1.3" height="13.2" fill="#bdbdbd"/><rect x="505.19" y="145.4" width="1" height="4.6" fill="#c4c4c4"/><rect x="511.10" y="145.4" width="1" height="4.6" fill="#c4c4c4"/><rect x="517.01" y="145.4" width="1" height="4.6" fill="#c4c4c4"/><rect x="522.93" y="145.4" width="1" height="4.6" fill="#c4c4c4"/><rect x="528.84" y="141" width="1" height="9" fill="#c4c4c4"/><rect x="534.75" y="145.4" width="1" height="4.6" fill="#c4c4c4"/><rect x="540.66" y="145.4" width="1" height="4.6" fill="#c4c4c4"/><rect x="546.58" y="145.4" width="1" height="4.6" fill="#c4c4c4"/><rect x="552.49" y="145.4" width="1" height="4.6" fill="#c4c4c4"/><rect x="558.25" y="136.8" width="1.3" height="13.2" fill="#bdbdbd"/><rect x="564.31" y="145.4" width="1" height="4.6" fill="#c4c4c4"/><rect x="570.23" y="145.4" width="1" height="4.6" fill="#c4c4c4"/><rect x="576.14" y="145.4" width="1" height="4.6" fill="#c4c4c4"/><rect x="582.05" y="145.4" width="1" height="4.6" fill="#c4c4c4"/><rect x="587.96" y="141" width="1" height="9" fill="#c4c4c4"/><rect x="593.88" y="145.4" width="1" height="4.6" fill="#c4c4c4"/><rect x="599.79" y="145.4" width="1" height="4.6" fill="#c4c4c4"/><rect x="605.70" y="145.4" width="1" height="4.6" fill="#c4c4c4"/><rect x="611.61" y="145.4" width="1" height="4.6" fill="#c4c4c4"/><rect x="617.38" y="136.8" width="1.3" height="13.2" fill="#bdbdbd"/><rect x="623.44" y="145.4" width="1" height="4.6" fill="#c4c4c4"/><rect x="629.35" y="145.4" width="1" height="4.6" fill="#c4c4c4"/><rect x="635.26" y="145.4" width="1" height="4.6" fill="#c4c4c4"/><rect x="641.18" y="145.4" width="1" height="4.6" fill="#c4c4c4"/><rect x="647.09" y="141" width="1" height="9" fill="#c4c4c4"/><rect x="653.00" y="145.4" width="1" height="4.6" fill="#c4c4c4"/><rect x="658.91" y="145.4" width="1" height="4.6" fill="#c4c4c4"/><rect x="664.83" y="145.4" width="1" height="4.6" fill="#c4c4c4"/><rect x="670.74" y="145.4" width="1" height="4.6" fill="#c4c4c4"/><rect x="676.50" y="136.8" width="1.3" height="13.2" fill="#bdbdbd"/><rect x="682.56" y="145.4" width="1" height="4.6" fill="#c4c4c4"/><rect x="688.48" y="145.4" width="1" height="4.6" fill="#c4c4c4"/><rect x="694.39" y="145.4" width="1" height="4.6" fill="#c4c4c4"/><rect x="700.30" y="145.4" width="1" height="4.6" fill="#c4c4c4"/><rect x="706.21" y="141" width="1" height="9" fill="#c4c4c4"/><rect x="712.12" y="145.4" width="1" height="4.6" fill="#c4c4c4"/><rect x="718.04" y="145.4" width="1" height="4.6" fill="#c4c4c4"/><rect x="723.95" y="145.4" width="1" height="4.6" fill="#c4c4c4"/><rect x="729.86" y="145.4" width="1" height="4.6" fill="#c4c4c4"/><rect x="735.63" y="136.8" width="1.3" height="13.2" fill="#bdbdbd"/><rect x="741.69" y="145.4" width="1" height="4.6" fill="#c4c4c4"/><rect x="747.60" y="145.4" width="1" height="4.6" fill="#c4c4c4"/><rect x="753.51" y="145.4" width="1" height="4.6" fill="#c4c4c4"/><rect x="759.43" y="145.4" width="1" height="4.6" fill="#c4c4c4"/><rect x="765.34" y="141" width="1" height="9" fill="#c4c4c4"/><rect x="771.25" y="145.4" width="1" height="4.6" fill="#c4c4c4"/><rect x="777.16" y="145.4" width="1" height="4.6" fill="#c4c4c4"/><rect x="783.08" y="145.4" width="1" height="4.6" fill="#c4c4c4"/><rect x="788.99" y="145.4" width="1" height="4.6" fill="#c4c4c4"/><rect x="794.75" y="136.8" width="1.3" height="13.2" fill="#bdbdbd"/><rect x="800.81" y="145.4" width="1" height="4.6" fill="#c4c4c4"/><rect x="806.73" y="145.4" width="1" height="4.6" fill="#c4c4c4"/><rect x="812.64" y="145.4" width="1" height="4.6" fill="#c4c4c4"/><rect x="818.55" y="145.4" width="1" height="4.6" fill="#c4c4c4"/><rect x="824.46" y="141" width="1" height="9" fill="#c4c4c4"/><rect x="830.38" y="145.4" width="1" height="4.6" fill="#c4c4c4"/><rect x="836.29" y="145.4" width="1" height="4.6" fill="#c4c4c4"/><rect x="842.20" y="145.4" width="1" height="4.6" fill="#c4c4c4"/><rect x="848.11" y="145.4" width="1" height="4.6" fill="#c4c4c4"/><rect x="853.88" y="136.8" width="1.3" height="13.2" fill="#bdbdbd"/><rect x="859.94" y="145.4" width="1" height="4.6" fill="#c4c4c4"/><rect x="865.85" y="145.4" width="1" height="4.6" fill="#c4c4c4"/><rect x="871.76" y="145.4" width="1" height="4.6" fill="#c4c4c4"/><rect x="877.68" y="145.4" width="1" height="4.6" fill="#c4c4c4"/><rect x="883.59" y="141" width="1" height="9" fill="#c4c4c4"/><rect x="889.50" y="145.4" width="1" height="4.6" fill="#c4c4c4"/><rect x="895.41" y="145.4" width="1" height="4.6" fill="#c4c4c4"/><rect x="901.33" y="145.4" width="1" height="4.6" fill="#c4c4c4"/><rect x="907.24" y="145.4" width="1" height="4.6" fill="#c4c4c4"/><rect x="913.00" y="136.8" width="1.3" height="13.2" fill="#bdbdbd"/><rect x="919.06" y="145.4" width="1" height="4.6" fill="#c4c4c4"/><rect x="924.98" y="145.4" width="1" height="4.6" fill="#c4c4c4"/><rect x="930.89" y="145.4" width="1" height="4.6" fill="#c4c4c4"/><rect x="936.80" y="145.4" width="1" height="4.6" fill="#c4c4c4"/><rect x="942.71" y="141" width="1" height="9" fill="#c4c4c4"/><rect x="948.62" y="145.4" width="1" height="4.6" fill="#c4c4c4"/><rect x="954.54" y="145.4" width="1" height="4.6" fill="#c4c4c4"/><rect x="960.45" y="145.4" width="1" height="4.6" fill="#c4c4c4"/><rect x="966.36" y="145.4" width="1" height="4.6" fill="#c4c4c4"/><rect x="972.13" y="136.8" width="1.3" height="13.2" fill="#bdbdbd"/><rect x="978.19" y="145.4" width="1" height="4.6" fill="#c4c4c4"/><rect x="984.10" y="145.4" width="1" height="4.6" fill="#c4c4c4"/><rect x="990.01" y="145.4" width="1" height="4.6" fill="#c4c4c4"/><rect x="995.93" y="145.4" width="1" height="4.6" fill="#c4c4c4"/><rect x="1001.84" y="141" width="1" height="9" fill="#c4c4c4"/><rect x="1007.75" y="145.4" width="1" height="4.6" fill="#c4c4c4"/><rect x="1013.66" y="145.4" width="1" height="4.6" fill="#c4c4c4"/><rect x="1019.58" y="145.4" width="1" height="4.6" fill="#c4c4c4"/><rect x="1025.49" y="145.4" width="1" height="4.6" fill="#c4c4c4"/><rect x="1031.25" y="136.8" width="1.3" height="13.2" fill="#bdbdbd"/><rect x="1037.31" y="145.4" width="1" height="4.6" fill="#c4c4c4"/><rect x="1043.23" y="145.4" width="1" height="4.6" fill="#c4c4c4"/><rect x="1049.14" y="145.4" width="1" height="4.6" fill="#c4c4c4"/><rect x="1055.05" y="145.4" width="1" height="4.6" fill="#c4c4c4"/><rect x="1060.96" y="141" width="1" height="9" fill="#c4c4c4"/><rect x="1066.88" y="145.4" width="1" height="4.6" fill="#c4c4c4"/><rect x="1072.79" y="145.4" width="1" height="4.6" fill="#c4c4c4"/><rect x="1078.70" y="145.4" width="1" height="4.6" fill="#c4c4c4"/><rect x="1084.61" y="145.4" width="1" height="4.6" fill="#c4c4c4"/><rect x="1090.38" y="136.8" width="1.3" height="13.2" fill="#bdbdbd"/><rect x="1096.44" y="145.4" width="1" height="4.6" fill="#c4c4c4"/><rect x="1102.35" y="145.4" width="1" height="4.6" fill="#c4c4c4"/><rect x="1108.26" y="145.4" width="1" height="4.6" fill="#c4c4c4"/><rect x="1114.18" y="145.4" width="1" height="4.6" fill="#c4c4c4"/><rect x="1120.09" y="141" width="1" height="9" fill="#c4c4c4"/><rect x="1126.00" y="145.4" width="1" height="4.6" fill="#c4c4c4"/><rect x="1131.91" y="145.4" width="1" height="4.6" fill="#c4c4c4"/><rect x="1137.83" y="145.4" width="1" height="4.6" fill="#c4c4c4"/><rect x="1143.74" y="145.4" width="1" height="4.6" fill="#c4c4c4"/><rect x="1149.50" y="136.8" width="1.3" height="13.2" fill="#bdbdbd"/><rect x="1155.56" y="145.4" width="1" height="4.6" fill="#c4c4c4"/><rect x="1161.48" y="145.4" width="1" height="4.6" fill="#c4c4c4"/><rect x="1167.39" y="145.4" width="1" height="4.6" fill="#c4c4c4"/><rect x="64.6" y="150.85" width="4.4" height="1" fill="#c4c4c4"/><rect x="64.6" y="156.76" width="4.4" height="1" fill="#c4c4c4"/><rect x="64.6" y="162.68" width="4.4" height="1" fill="#c4c4c4"/><rect x="64.6" y="168.59" width="4.4" height="1" fill="#c4c4c4"/><rect x="55.7" y="174.35" width="13.3" height="1.1" fill="#c0c0c0"/><rect x="64.6" y="180.41" width="4.4" height="1" fill="#c4c4c4"/><rect x="64.6" y="186.32" width="4.4" height="1" fill="#c4c4c4"/><rect x="64.6" y="192.24" width="4.4" height="1" fill="#c4c4c4"/><rect x="64.6" y="198.15" width="4.4" height="1" fill="#c4c4c4"/><rect x="60" y="204.06" width="9" height="1" fill="#c4c4c4"/><rect x="64.6" y="209.97" width="4.4" height="1" fill="#c4c4c4"/><rect x="64.6" y="215.89" width="4.4" height="1" fill="#c4c4c4"/><rect x="64.6" y="221.80" width="4.4" height="1" fill="#c4c4c4"/><rect x="64.6" y="227.71" width="4.4" height="1" fill="#c4c4c4"/><rect x="55.7" y="233.47" width="13.3" height="1.1" fill="#c0c0c0"/><rect x="64.6" y="239.54" width="4.4" height="1" fill="#c4c4c4"/><rect x="64.6" y="245.45" width="4.4" height="1" fill="#c4c4c4"/><rect x="64.6" y="251.36" width="4.4" height="1" fill="#c4c4c4"/><rect x="64.6" y="257.27" width="4.4" height="1" fill="#c4c4c4"/><rect x="60" y="263.19" width="9" height="1" fill="#c4c4c4"/><rect x="64.6" y="269.10" width="4.4" height="1" fill="#c4c4c4"/><rect x="64.6" y="275.01" width="4.4" height="1" fill="#c4c4c4"/><rect x="64.6" y="280.93" width="4.4" height="1" fill="#c4c4c4"/><rect x="64.6" y="286.84" width="4.4" height="1" fill="#c4c4c4"/><rect x="55.7" y="292.60" width="13.3" height="1.1" fill="#c0c0c0"/><rect x="64.6" y="298.66" width="4.4" height="1" fill="#c4c4c4"/><rect x="64.6" y="304.58" width="4.4" height="1" fill="#c4c4c4"/><rect x="64.6" y="310.49" width="4.4" height="1" fill="#c4c4c4"/><rect x="64.6" y="316.40" width="4.4" height="1" fill="#c4c4c4"/><rect x="60" y="322.31" width="9" height="1" fill="#c4c4c4"/><rect x="64.6" y="328.23" width="4.4" height="1" fill="#c4c4c4"/><rect x="64.6" y="334.14" width="4.4" height="1" fill="#c4c4c4"/><rect x="64.6" y="340.05" width="4.4" height="1" fill="#c4c4c4"/><rect x="64.6" y="345.96" width="4.4" height="1" fill="#c4c4c4"/><rect x="55.7" y="351.73" width="13.3" height="1.1" fill="#c0c0c0"/><rect x="64.6" y="357.79" width="4.4" height="1" fill="#c4c4c4"/><rect x="64.6" y="363.70" width="4.4" height="1" fill="#c4c4c4"/><rect x="64.6" y="369.61" width="4.4" height="1" fill="#c4c4c4"/><rect x="64.6" y="375.52" width="4.4" height="1" fill="#c4c4c4"/><rect x="60" y="381.44" width="9" height="1" fill="#c4c4c4"/><rect x="64.6" y="387.35" width="4.4" height="1" fill="#c4c4c4"/><rect x="64.6" y="393.26" width="4.4" height="1" fill="#c4c4c4"/><rect x="64.6" y="399.18" width="4.4" height="1" fill="#c4c4c4"/><rect x="64.6" y="405.09" width="4.4" height="1" fill="#c4c4c4"/><rect x="55.7" y="410.85" width="13.3" height="1.1" fill="#c0c0c0"/><rect x="64.6" y="416.91" width="4.4" height="1" fill="#c4c4c4"/><rect x="64.6" y="422.83" width="4.4" height="1" fill="#c4c4c4"/><rect x="64.6" y="428.74" width="4.4" height="1" fill="#c4c4c4"/><rect x="64.6" y="434.65" width="4.4" height="1" fill="#c4c4c4"/><rect x="60" y="440.56" width="9" height="1" fill="#c4c4c4"/><rect x="64.6" y="446.48" width="4.4" height="1" fill="#c4c4c4"/><rect x="64.6" y="452.39" width="4.4" height="1" fill="#c4c4c4"/><rect x="64.6" y="458.30" width="4.4" height="1" fill="#c4c4c4"/><rect x="64.6" y="464.21" width="4.4" height="1" fill="#c4c4c4"/><rect x="55.7" y="469.98" width="13.3" height="1.1" fill="#c0c0c0"/><rect x="64.6" y="476.04" width="4.4" height="1" fill="#c4c4c4"/><rect x="64.6" y="481.95" width="4.4" height="1" fill="#c4c4c4"/><rect x="64.6" y="487.86" width="4.4" height="1" fill="#c4c4c4"/><rect x="64.6" y="493.78" width="4.4" height="1" fill="#c4c4c4"/><rect x="60" y="499.69" width="9" height="1" fill="#c4c4c4"/><rect x="64.6" y="505.60" width="4.4" height="1" fill="#c4c4c4"/><rect x="64.6" y="511.51" width="4.4" height="1" fill="#c4c4c4"/><rect x="64.6" y="517.42" width="4.4" height="1" fill="#c4c4c4"/><rect x="64.6" y="523.34" width="4.4" height="1" fill="#c4c4c4"/><rect x="55.7" y="529.10" width="13.3" height="1.1" fill="#c0c0c0"/><rect x="64.6" y="535.16" width="4.4" height="1" fill="#c4c4c4"/><rect x="64.6" y="541.08" width="4.4" height="1" fill="#c4c4c4"/><rect x="64.6" y="546.99" width="4.4" height="1" fill="#c4c4c4"/><rect x="64.6" y="552.90" width="4.4" height="1" fill="#c4c4c4"/><rect x="60" y="558.81" width="9" height="1" fill="#c4c4c4"/><rect x="64.6" y="564.73" width="4.4" height="1" fill="#c4c4c4"/><rect x="64.6" y="570.64" width="4.4" height="1" fill="#c4c4c4"/><rect x="64.6" y="576.55" width="4.4" height="1" fill="#c4c4c4"/><rect x="64.6" y="582.46" width="4.4" height="1" fill="#c4c4c4"/><rect x="55.7" y="588.23" width="13.3" height="1.1" fill="#c0c0c0"/><rect x="64.6" y="594.29" width="4.4" height="1" fill="#c4c4c4"/><rect x="64.6" y="600.20" width="4.4" height="1" fill="#c4c4c4"/><rect x="64.6" y="606.11" width="4.4" height="1" fill="#c4c4c4"/><rect x="64.6" y="612.03" width="4.4" height="1" fill="#c4c4c4"/><rect x="60" y="617.94" width="9" height="1" fill="#c4c4c4"/><rect x="64.6" y="623.85" width="4.4" height="1" fill="#c4c4c4"/><rect x="64.6" y="629.76" width="4.4" height="1" fill="#c4c4c4"/><rect x="64.6" y="635.68" width="4.4" height="1" fill="#c4c4c4"/><rect x="64.6" y="641.59" width="4.4" height="1" fill="#c4c4c4"/><rect x="55.7" y="647.35" width="13.3" height="1.1" fill="#c0c0c0"/><rect x="64.6" y="653.41" width="4.4" height="1" fill="#c4c4c4"/><rect x="64.6" y="659.33" width="4.4" height="1" fill="#c4c4c4"/><rect x="64.6" y="665.24" width="4.4" height="1" fill="#c4c4c4"/><rect x="64.6" y="671.15" width="4.4" height="1" fill="#c4c4c4"/><rect x="60" y="677.06" width="9" height="1" fill="#c4c4c4"/><rect x="64.6" y="682.98" width="4.4" height="1" fill="#c4c4c4"/><rect x="64.6" y="688.89" width="4.4" height="1" fill="#c4c4c4"/><rect x="64.6" y="694.80" width="4.4" height="1" fill="#c4c4c4"/><rect x="64.6" y="700.71" width="4.4" height="1" fill="#c4c4c4"/><rect x="55.7" y="706.48" width="13.3" height="1.1" fill="#c0c0c0"/><rect x="64.6" y="712.54" width="4.4" height="1" fill="#c4c4c4"/><rect x="64.6" y="718.45" width="4.4" height="1" fill="#c4c4c4"/><rect x="64.6" y="724.36" width="4.4" height="1" fill="#c4c4c4"/><rect x="64.6" y="730.28" width="4.4" height="1" fill="#c4c4c4"/><rect x="60" y="736.19" width="9" height="1" fill="#c4c4c4"/><rect x="64.6" y="742.10" width="4.4" height="1" fill="#c4c4c4"/><rect x="64.6" y="748.01" width="4.4" height="1" fill="#c4c4c4"/><rect x="64.6" y="753.93" width="4.4" height="1" fill="#c4c4c4"/><rect x="64.6" y="759.84" width="4.4" height="1" fill="#c4c4c4"/><rect x="55.7" y="765.60" width="13.3" height="1.1" fill="#c0c0c0"/><rect x="64.6" y="771.66" width="4.4" height="1" fill="#c4c4c4"/><rect x="64.6" y="777.58" width="4.4" height="1" fill="#c4c4c4"/><rect x="64.6" y="783.49" width="4.4" height="1" fill="#c4c4c4"/><rect x="64.6" y="789.40" width="4.4" height="1" fill="#c4c4c4"/><rect x="60" y="795.31" width="9" height="1" fill="#c4c4c4"/><rect x="64.6" y="801.23" width="4.4" height="1" fill="#c4c4c4"/><rect x="64.6" y="807.14" width="4.4" height="1" fill="#c4c4c4"/><rect x="64.6" y="813.05" width="4.4" height="1" fill="#c4c4c4"/><rect x="64.6" y="818.96" width="4.4" height="1" fill="#c4c4c4"/><rect x="55.7" y="824.73" width="13.3" height="1.1" fill="#c0c0c0"/><rect x="64.6" y="830.79" width="4.4" height="1" fill="#c4c4c4"/><rect x="64.6" y="836.70" width="4.4" height="1" fill="#c4c4c4"/><rect x="64.6" y="842.61" width="4.4" height="1" fill="#c4c4c4"/><rect x="64.6" y="848.53" width="4.4" height="1" fill="#c4c4c4"/><rect x="60" y="854.44" width="9" height="1" fill="#c4c4c4"/><rect x="64.6" y="860.35" width="4.4" height="1" fill="#c4c4c4"/><rect x="64.6" y="866.26" width="4.4" height="1" fill="#c4c4c4"/><rect x="64.6" y="872.18" width="4.4" height="1" fill="#c4c4c4"/><rect x="64.6" y="878.09" width="4.4" height="1" fill="#c4c4c4"/><rect x="55.7" y="883.85" width="13.3" height="1.1" fill="#c0c0c0"/><rect x="64.6" y="889.91" width="4.4" height="1" fill="#c4c4c4"/><rect x="64.6" y="895.83" width="4.4" height="1" fill="#c4c4c4"/><rect x="64.6" y="901.74" width="4.4" height="1" fill="#c4c4c4"/><rect x="64.6" y="907.65" width="4.4" height="1" fill="#c4c4c4"/><rect x="60" y="913.56" width="9" height="1" fill="#c4c4c4"/><rect x="64.6" y="919.48" width="4.4" height="1" fill="#c4c4c4"/><rect x="64.6" y="925.39" width="4.4" height="1" fill="#c4c4c4"/><rect x="64.6" y="931.30" width="4.4" height="1" fill="#c4c4c4"/><rect x="64.6" y="937.21" width="4.4" height="1" fill="#c4c4c4"/><rect x="55.7" y="942.98" width="13.3" height="1.1" fill="#c0c0c0"/><rect x="64.6" y="949.04" width="4.4" height="1" fill="#c4c4c4"/>
<g fill="none" stroke="#f6f6f6" stroke-width="1.15" stroke-linecap="butt"><g transform="translate(88.40,136.7)"><path transform="translate(0.00,0)" d="M0.3,2.8 L3.7,2.8"/><path transform="translate(4.10,0)" d="M5,0.5 L0.5,0.5 L0.5,2.8 L4,2.8 Q5,2.8 5,3.8 L5,4.1 Q5,5.1 4,5.1 L0.5,5.1"/><path transform="translate(10.40,0)" d="M0.5,0.5 L5.1,0.5 L2.4,5.1"/><path transform="translate(16.70,0)" d="M5,0.5 L0.5,0.5 L0.5,2.8 L4,2.8 Q5,2.8 5,3.8 L5,4.1 Q5,5.1 4,5.1 L0.5,5.1"/></g><g transform="translate(147.53,136.7)"><path transform="translate(0.00,0)" d="M0.3,2.8 L3.7,2.8"/><path transform="translate(4.10,0)" d="M5,0.5 L0.5,0.5 L0.5,2.8 L4,2.8 Q5,2.8 5,3.8 L5,4.1 Q5,5.1 4,5.1 L0.5,5.1"/><path transform="translate(10.40,0)" d="M5,0.5 L0.5,0.5 L0.5,2.8 L4,2.8 Q5,2.8 5,3.8 L5,4.1 Q5,5.1 4,5.1 L0.5,5.1"/><path transform="translate(16.70,0)" d="M1.9,0.5 L3.6,0.5 L5,1.9 L5,3.7 L3.6,5.1 L1.9,5.1 L0.5,3.7 L0.5,1.9 Z"/></g><g transform="translate(206.65,136.7)"><path transform="translate(0.00,0)" d="M0.3,2.8 L3.7,2.8"/><path transform="translate(4.10,0)" d="M5,0.5 L0.5,0.5 L0.5,2.8 L4,2.8 Q5,2.8 5,3.8 L5,4.1 Q5,5.1 4,5.1 L0.5,5.1"/><path transform="translate(10.40,0)" d="M0.5,0.5 L4,0.5 Q5,0.5 5,1.5 L5,1.8 Q5,2.8 4,2.8 L1.5,2.8 Q0.5,2.8 0.5,3.8 L0.5,5.1 L5.1,5.1"/><path transform="translate(16.70,0)" d="M5,0.5 L0.5,0.5 L0.5,2.8 L4,2.8 Q5,2.8 5,3.8 L5,4.1 Q5,5.1 4,5.1 L0.5,5.1"/></g><g transform="translate(265.78,136.7)"><path transform="translate(0.00,0)" d="M0.3,2.8 L3.7,2.8"/><path transform="translate(4.10,0)" d="M5,0.5 L0.5,0.5 L0.5,2.8 L4,2.8 Q5,2.8 5,3.8 L5,4.1 Q5,5.1 4,5.1 L0.5,5.1"/><path transform="translate(10.40,0)" d="M1.9,0.5 L3.6,0.5 L5,1.9 L5,3.7 L3.6,5.1 L1.9,5.1 L0.5,3.7 L0.5,1.9 Z"/><path transform="translate(16.70,0)" d="M1.9,0.5 L3.6,0.5 L5,1.9 L5,3.7 L3.6,5.1 L1.9,5.1 L0.5,3.7 L0.5,1.9 Z"/></g><g transform="translate(324.90,136.7)"><path transform="translate(0.00,0)" d="M0.3,2.8 L3.7,2.8"/><path transform="translate(4.10,0)" d="M0.6,0.3 L0.6,3.3 L5.3,3.3 M4.1,0.5 L4.1,5.2"/><path transform="translate(10.40,0)" d="M0.5,0.5 L5.1,0.5 L2.4,5.1"/><path transform="translate(16.70,0)" d="M5,0.5 L0.5,0.5 L0.5,2.8 L4,2.8 Q5,2.8 5,3.8 L5,4.1 Q5,5.1 4,5.1 L0.5,5.1"/></g><g transform="translate(384.02,136.7)"><path transform="translate(0.00,0)" d="M0.3,2.8 L3.7,2.8"/><path transform="translate(4.10,0)" d="M0.6,0.3 L0.6,3.3 L5.3,3.3 M4.1,0.5 L4.1,5.2"/><path transform="translate(10.40,0)" d="M5,0.5 L0.5,0.5 L0.5,2.8 L4,2.8 Q5,2.8 5,3.8 L5,4.1 Q5,5.1 4,5.1 L0.5,5.1"/><path transform="translate(16.70,0)" d="M1.9,0.5 L3.6,0.5 L5,1.9 L5,3.7 L3.6,5.1 L1.9,5.1 L0.5,3.7 L0.5,1.9 Z"/></g><g transform="translate(443.15,136.7)"><path transform="translate(0.00,0)" d="M0.3,2.8 L3.7,2.8"/><path transform="translate(4.10,0)" d="M0.6,0.3 L0.6,3.3 L5.3,3.3 M4.1,0.5 L4.1,5.2"/><path transform="translate(10.40,0)" d="M0.5,0.5 L4,0.5 Q5,0.5 5,1.5 L5,1.8 Q5,2.8 4,2.8 L1.5,2.8 Q0.5,2.8 0.5,3.8 L0.5,5.1 L5.1,5.1"/><path transform="translate(16.70,0)" d="M5,0.5 L0.5,0.5 L0.5,2.8 L4,2.8 Q5,2.8 5,3.8 L5,4.1 Q5,5.1 4,5.1 L0.5,5.1"/></g><g transform="translate(502.28,136.7)"><path transform="translate(0.00,0)" d="M0.3,2.8 L3.7,2.8"/><path transform="translate(4.10,0)" d="M0.6,0.3 L0.6,3.3 L5.3,3.3 M4.1,0.5 L4.1,5.2"/><path transform="translate(10.40,0)" d="M1.9,0.5 L3.6,0.5 L5,1.9 L5,3.7 L3.6,5.1 L1.9,5.1 L0.5,3.7 L0.5,1.9 Z"/><path transform="translate(16.70,0)" d="M1.9,0.5 L3.6,0.5 L5,1.9 L5,3.7 L3.6,5.1 L1.9,5.1 L0.5,3.7 L0.5,1.9 Z"/></g><g transform="translate(561.40,136.7)"><path transform="translate(0.00,0)" d="M0.3,2.8 L3.7,2.8"/><path transform="translate(4.10,0)" d="M0.5,0.5 L4,0.5 Q5,0.5 5,1.5 L5,1.8 Q5,2.8 4,2.8 L1.6,2.8 M4,2.8 Q5,2.8 5,3.8 L5,4.1 Q5,5.1 4,5.1 L0.5,5.1"/><path transform="translate(10.40,0)" d="M0.5,0.5 L5.1,0.5 L2.4,5.1"/><path transform="translate(16.70,0)" d="M5,0.5 L0.5,0.5 L0.5,2.8 L4,2.8 Q5,2.8 5,3.8 L5,4.1 Q5,5.1 4,5.1 L0.5,5.1"/></g><g transform="translate(620.52,136.7)"><path transform="translate(0.00,0)" d="M0.3,2.8 L3.7,2.8"/><path transform="translate(4.10,0)" d="M0.5,0.5 L4,0.5 Q5,0.5 5,1.5 L5,1.8 Q5,2.8 4,2.8 L1.6,2.8 M4,2.8 Q5,2.8 5,3.8 L5,4.1 Q5,5.1 4,5.1 L0.5,5.1"/><path transform="translate(10.40,0)" d="M5,0.5 L0.5,0.5 L0.5,2.8 L4,2.8 Q5,2.8 5,3.8 L5,4.1 Q5,5.1 4,5.1 L0.5,5.1"/><path transform="translate(16.70,0)" d="M1.9,0.5 L3.6,0.5 L5,1.9 L5,3.7 L3.6,5.1 L1.9,5.1 L0.5,3.7 L0.5,1.9 Z"/></g><g transform="translate(679.65,136.7)"><path transform="translate(0.00,0)" d="M0.3,2.8 L3.7,2.8"/><path transform="translate(4.10,0)" d="M0.5,0.5 L4,0.5 Q5,0.5 5,1.5 L5,1.8 Q5,2.8 4,2.8 L1.6,2.8 M4,2.8 Q5,2.8 5,3.8 L5,4.1 Q5,5.1 4,5.1 L0.5,5.1"/><path transform="translate(10.40,0)" d="M0.5,0.5 L4,0.5 Q5,0.5 5,1.5 L5,1.8 Q5,2.8 4,2.8 L1.5,2.8 Q0.5,2.8 0.5,3.8 L0.5,5.1 L5.1,5.1"/><path transform="translate(16.70,0)" d="M5,0.5 L0.5,0.5 L0.5,2.8 L4,2.8 Q5,2.8 5,3.8 L5,4.1 Q5,5.1 4,5.1 L0.5,5.1"/></g><g transform="translate(738.78,136.7)"><path transform="translate(0.00,0)" d="M0.3,2.8 L3.7,2.8"/><path transform="translate(4.10,0)" d="M0.5,0.5 L4,0.5 Q5,0.5 5,1.5 L5,1.8 Q5,2.8 4,2.8 L1.6,2.8 M4,2.8 Q5,2.8 5,3.8 L5,4.1 Q5,5.1 4,5.1 L0.5,5.1"/><path transform="translate(10.40,0)" d="M1.9,0.5 L3.6,0.5 L5,1.9 L5,3.7 L3.6,5.1 L1.9,5.1 L0.5,3.7 L0.5,1.9 Z"/><path transform="translate(16.70,0)" d="M1.9,0.5 L3.6,0.5 L5,1.9 L5,3.7 L3.6,5.1 L1.9,5.1 L0.5,3.7 L0.5,1.9 Z"/></g><g transform="translate(797.90,136.7)"><path transform="translate(0.00,0)" d="M0.3,2.8 L3.7,2.8"/><path transform="translate(4.10,0)" d="M0.5,0.5 L4,0.5 Q5,0.5 5,1.5 L5,1.8 Q5,2.8 4,2.8 L1.5,2.8 Q0.5,2.8 0.5,3.8 L0.5,5.1 L5.1,5.1"/><path transform="translate(10.40,0)" d="M0.5,0.5 L5.1,0.5 L2.4,5.1"/><path transform="translate(16.70,0)" d="M5,0.5 L0.5,0.5 L0.5,2.8 L4,2.8 Q5,2.8 5,3.8 L5,4.1 Q5,5.1 4,5.1 L0.5,5.1"/></g><g transform="translate(857.03,136.7)"><path transform="translate(0.00,0)" d="M0.3,2.8 L3.7,2.8"/><path transform="translate(4.10,0)" d="M0.5,0.5 L4,0.5 Q5,0.5 5,1.5 L5,1.8 Q5,2.8 4,2.8 L1.5,2.8 Q0.5,2.8 0.5,3.8 L0.5,5.1 L5.1,5.1"/><path transform="translate(10.40,0)" d="M5,0.5 L0.5,0.5 L0.5,2.8 L4,2.8 Q5,2.8 5,3.8 L5,4.1 Q5,5.1 4,5.1 L0.5,5.1"/><path transform="translate(16.70,0)" d="M1.9,0.5 L3.6,0.5 L5,1.9 L5,3.7 L3.6,5.1 L1.9,5.1 L0.5,3.7 L0.5,1.9 Z"/></g><g transform="translate(916.15,136.7)"><path transform="translate(0.00,0)" d="M0.3,2.8 L3.7,2.8"/><path transform="translate(4.10,0)" d="M0.5,0.5 L4,0.5 Q5,0.5 5,1.5 L5,1.8 Q5,2.8 4,2.8 L1.5,2.8 Q0.5,2.8 0.5,3.8 L0.5,5.1 L5.1,5.1"/><path transform="translate(10.40,0)" d="M0.5,0.5 L4,0.5 Q5,0.5 5,1.5 L5,1.8 Q5,2.8 4,2.8 L1.5,2.8 Q0.5,2.8 0.5,3.8 L0.5,5.1 L5.1,5.1"/><path transform="translate(16.70,0)" d="M5,0.5 L0.5,0.5 L0.5,2.8 L4,2.8 Q5,2.8 5,3.8 L5,4.1 Q5,5.1 4,5.1 L0.5,5.1"/></g><g transform="translate(975.28,136.7)"><path transform="translate(0.00,0)" d="M0.3,2.8 L3.7,2.8"/><path transform="translate(4.10,0)" d="M0.5,0.5 L4,0.5 Q5,0.5 5,1.5 L5,1.8 Q5,2.8 4,2.8 L1.5,2.8 Q0.5,2.8 0.5,3.8 L0.5,5.1 L5.1,5.1"/><path transform="translate(10.40,0)" d="M1.9,0.5 L3.6,0.5 L5,1.9 L5,3.7 L3.6,5.1 L1.9,5.1 L0.5,3.7 L0.5,1.9 Z"/><path transform="translate(16.70,0)" d="M1.9,0.5 L3.6,0.5 L5,1.9 L5,3.7 L3.6,5.1 L1.9,5.1 L0.5,3.7 L0.5,1.9 Z"/></g><g transform="translate(1034.40,136.7)"><path transform="translate(0.00,0)" d="M0.3,2.8 L3.7,2.8"/><path transform="translate(4.10,0)" d="M1.4,1.4 L2.8,0.5 L2.8,5.1"/><path transform="translate(10.40,0)" d="M0.5,0.5 L5.1,0.5 L2.4,5.1"/><path transform="translate(16.70,0)" d="M5,0.5 L0.5,0.5 L0.5,2.8 L4,2.8 Q5,2.8 5,3.8 L5,4.1 Q5,5.1 4,5.1 L0.5,5.1"/></g><g transform="translate(1093.53,136.7)"><path transform="translate(0.00,0)" d="M0.3,2.8 L3.7,2.8"/><path transform="translate(4.10,0)" d="M1.4,1.4 L2.8,0.5 L2.8,5.1"/><path transform="translate(10.40,0)" d="M5,0.5 L0.5,0.5 L0.5,2.8 L4,2.8 Q5,2.8 5,3.8 L5,4.1 Q5,5.1 4,5.1 L0.5,5.1"/><path transform="translate(16.70,0)" d="M1.9,0.5 L3.6,0.5 L5,1.9 L5,3.7 L3.6,5.1 L1.9,5.1 L0.5,3.7 L0.5,1.9 Z"/></g><g transform="translate(1152.65,136.7)"><path transform="translate(0.00,0)" d="M0.3,2.8 L3.7,2.8"/><path transform="translate(4.10,0)" d="M1.4,1.4 L2.8,0.5 L2.8,5.1"/><path transform="translate(10.40,0)" d="M0.5,0.5 L4,0.5 Q5,0.5 5,1.5 L5,1.8 Q5,2.8 4,2.8 L1.5,2.8 Q0.5,2.8 0.5,3.8 L0.5,5.1 L5.1,5.1"/><path transform="translate(16.70,0)" d="M5,0.5 L0.5,0.5 L0.5,2.8 L4,2.8 Q5,2.8 5,3.8 L5,4.1 Q5,5.1 4,5.1 L0.5,5.1"/></g><g transform="translate(54.9,172.50) rotate(-90)"><path transform="translate(0.00,0)" d="M0.9,5.1 L4,5.1 Q5,5.1 5,4.1 L5,1.5 Q5,0.5 4,0.5 L1.5,0.5 Q0.5,0.5 0.5,1.5 L0.5,1.8 Q0.5,2.8 1.5,2.8 L5,2.8"/><path transform="translate(6.30,0)" d="M0.5,0.5 L5.1,0.5 L2.4,5.1"/><path transform="translate(12.60,0)" d="M5,0.5 L0.5,0.5 L0.5,2.8 L4,2.8 Q5,2.8 5,3.8 L5,4.1 Q5,5.1 4,5.1 L0.5,5.1"/></g><g transform="translate(54.9,231.62) rotate(-90)"><path transform="translate(0.00,0)" d="M0.9,5.1 L4,5.1 Q5,5.1 5,4.1 L5,1.5 Q5,0.5 4,0.5 L1.5,0.5 Q0.5,0.5 0.5,1.5 L0.5,1.8 Q0.5,2.8 1.5,2.8 L5,2.8"/><path transform="translate(6.30,0)" d="M5,0.5 L0.5,0.5 L0.5,2.8 L4,2.8 Q5,2.8 5,3.8 L5,4.1 Q5,5.1 4,5.1 L0.5,5.1"/><path transform="translate(12.60,0)" d="M1.9,0.5 L3.6,0.5 L5,1.9 L5,3.7 L3.6,5.1 L1.9,5.1 L0.5,3.7 L0.5,1.9 Z"/></g><g transform="translate(54.9,290.75) rotate(-90)"><path transform="translate(0.00,0)" d="M0.9,5.1 L4,5.1 Q5,5.1 5,4.1 L5,1.5 Q5,0.5 4,0.5 L1.5,0.5 Q0.5,0.5 0.5,1.5 L0.5,1.8 Q0.5,2.8 1.5,2.8 L5,2.8"/><path transform="translate(6.30,0)" d="M0.5,0.5 L4,0.5 Q5,0.5 5,1.5 L5,1.8 Q5,2.8 4,2.8 L1.5,2.8 Q0.5,2.8 0.5,3.8 L0.5,5.1 L5.1,5.1"/><path transform="translate(12.60,0)" d="M5,0.5 L0.5,0.5 L0.5,2.8 L4,2.8 Q5,2.8 5,3.8 L5,4.1 Q5,5.1 4,5.1 L0.5,5.1"/></g><g transform="translate(54.9,349.88) rotate(-90)"><path transform="translate(0.00,0)" d="M0.9,5.1 L4,5.1 Q5,5.1 5,4.1 L5,1.5 Q5,0.5 4,0.5 L1.5,0.5 Q0.5,0.5 0.5,1.5 L0.5,1.8 Q0.5,2.8 1.5,2.8 L5,2.8"/><path transform="translate(6.30,0)" d="M1.9,0.5 L3.6,0.5 L5,1.9 L5,3.7 L3.6,5.1 L1.9,5.1 L0.5,3.7 L0.5,1.9 Z"/><path transform="translate(12.60,0)" d="M1.9,0.5 L3.6,0.5 L5,1.9 L5,3.7 L3.6,5.1 L1.9,5.1 L0.5,3.7 L0.5,1.9 Z"/></g><g transform="translate(54.9,409.00) rotate(-90)"><path transform="translate(0.00,0)" d="M1.5,0.5 L4,0.5 Q5,0.5 5,1.5 L5,4.1 Q5,5.1 4,5.1 L1.5,5.1 Q0.5,5.1 0.5,4.1 L0.5,1.5 Q0.5,0.5 1.5,0.5 Z M0.5,2.8 L5,2.8"/><path transform="translate(6.30,0)" d="M0.5,0.5 L5.1,0.5 L2.4,5.1"/><path transform="translate(12.60,0)" d="M5,0.5 L0.5,0.5 L0.5,2.8 L4,2.8 Q5,2.8 5,3.8 L5,4.1 Q5,5.1 4,5.1 L0.5,5.1"/></g><g transform="translate(54.9,468.12) rotate(-90)"><path transform="translate(0.00,0)" d="M1.5,0.5 L4,0.5 Q5,0.5 5,1.5 L5,4.1 Q5,5.1 4,5.1 L1.5,5.1 Q0.5,5.1 0.5,4.1 L0.5,1.5 Q0.5,0.5 1.5,0.5 Z M0.5,2.8 L5,2.8"/><path transform="translate(6.30,0)" d="M5,0.5 L0.5,0.5 L0.5,2.8 L4,2.8 Q5,2.8 5,3.8 L5,4.1 Q5,5.1 4,5.1 L0.5,5.1"/><path transform="translate(12.60,0)" d="M1.9,0.5 L3.6,0.5 L5,1.9 L5,3.7 L3.6,5.1 L1.9,5.1 L0.5,3.7 L0.5,1.9 Z"/></g><g transform="translate(54.9,527.25) rotate(-90)"><path transform="translate(0.00,0)" d="M1.5,0.5 L4,0.5 Q5,0.5 5,1.5 L5,4.1 Q5,5.1 4,5.1 L1.5,5.1 Q0.5,5.1 0.5,4.1 L0.5,1.5 Q0.5,0.5 1.5,0.5 Z M0.5,2.8 L5,2.8"/><path transform="translate(6.30,0)" d="M0.5,0.5 L4,0.5 Q5,0.5 5,1.5 L5,1.8 Q5,2.8 4,2.8 L1.5,2.8 Q0.5,2.8 0.5,3.8 L0.5,5.1 L5.1,5.1"/><path transform="translate(12.60,0)" d="M5,0.5 L0.5,0.5 L0.5,2.8 L4,2.8 Q5,2.8 5,3.8 L5,4.1 Q5,5.1 4,5.1 L0.5,5.1"/></g><g transform="translate(54.9,586.38) rotate(-90)"><path transform="translate(0.00,0)" d="M1.5,0.5 L4,0.5 Q5,0.5 5,1.5 L5,4.1 Q5,5.1 4,5.1 L1.5,5.1 Q0.5,5.1 0.5,4.1 L0.5,1.5 Q0.5,0.5 1.5,0.5 Z M0.5,2.8 L5,2.8"/><path transform="translate(6.30,0)" d="M1.9,0.5 L3.6,0.5 L5,1.9 L5,3.7 L3.6,5.1 L1.9,5.1 L0.5,3.7 L0.5,1.9 Z"/><path transform="translate(12.60,0)" d="M1.9,0.5 L3.6,0.5 L5,1.9 L5,3.7 L3.6,5.1 L1.9,5.1 L0.5,3.7 L0.5,1.9 Z"/></g><g transform="translate(54.9,645.50) rotate(-90)"><path transform="translate(0.00,0)" d="M0.5,0.5 L5.1,0.5 L2.4,5.1"/><path transform="translate(6.30,0)" d="M0.5,0.5 L5.1,0.5 L2.4,5.1"/><path transform="translate(12.60,0)" d="M5,0.5 L0.5,0.5 L0.5,2.8 L4,2.8 Q5,2.8 5,3.8 L5,4.1 Q5,5.1 4,5.1 L0.5,5.1"/></g><g transform="translate(54.9,704.62) rotate(-90)"><path transform="translate(0.00,0)" d="M0.5,0.5 L5.1,0.5 L2.4,5.1"/><path transform="translate(6.30,0)" d="M5,0.5 L0.5,0.5 L0.5,2.8 L4,2.8 Q5,2.8 5,3.8 L5,4.1 Q5,5.1 4,5.1 L0.5,5.1"/><path transform="translate(12.60,0)" d="M1.9,0.5 L3.6,0.5 L5,1.9 L5,3.7 L3.6,5.1 L1.9,5.1 L0.5,3.7 L0.5,1.9 Z"/></g><g transform="translate(54.9,763.75) rotate(-90)"><path transform="translate(0.00,0)" d="M0.5,0.5 L5.1,0.5 L2.4,5.1"/><path transform="translate(6.30,0)" d="M0.5,0.5 L4,0.5 Q5,0.5 5,1.5 L5,1.8 Q5,2.8 4,2.8 L1.5,2.8 Q0.5,2.8 0.5,3.8 L0.5,5.1 L5.1,5.1"/><path transform="translate(12.60,0)" d="M5,0.5 L0.5,0.5 L0.5,2.8 L4,2.8 Q5,2.8 5,3.8 L5,4.1 Q5,5.1 4,5.1 L0.5,5.1"/></g><g transform="translate(54.9,822.88) rotate(-90)"><path transform="translate(0.00,0)" d="M0.5,0.5 L5.1,0.5 L2.4,5.1"/><path transform="translate(6.30,0)" d="M1.9,0.5 L3.6,0.5 L5,1.9 L5,3.7 L3.6,5.1 L1.9,5.1 L0.5,3.7 L0.5,1.9 Z"/><path transform="translate(12.60,0)" d="M1.9,0.5 L3.6,0.5 L5,1.9 L5,3.7 L3.6,5.1 L1.9,5.1 L0.5,3.7 L0.5,1.9 Z"/></g><g transform="translate(54.9,882.00) rotate(-90)"><path transform="translate(0.00,0)" d="M4.6,0.5 L1.5,0.5 Q0.5,0.5 0.5,1.5 L0.5,4.1 Q0.5,5.1 1.5,5.1 L4,5.1 Q5,5.1 5,4.1 L5,3.8 Q5,2.8 4,2.8 L0.5,2.8"/><path transform="translate(6.30,0)" d="M0.5,0.5 L5.1,0.5 L2.4,5.1"/><path transform="translate(12.60,0)" d="M5,0.5 L0.5,0.5 L0.5,2.8 L4,2.8 Q5,2.8 5,3.8 L5,4.1 Q5,5.1 4,5.1 L0.5,5.1"/></g><g transform="translate(54.9,941.13) rotate(-90)"><path transform="translate(0.00,0)" d="M4.6,0.5 L1.5,0.5 Q0.5,0.5 0.5,1.5 L0.5,4.1 Q0.5,5.1 1.5,5.1 L4,5.1 Q5,5.1 5,4.1 L5,3.8 Q5,2.8 4,2.8 L0.5,2.8"/><path transform="translate(6.30,0)" d="M5,0.5 L0.5,0.5 L0.5,2.8 L4,2.8 Q5,2.8 5,3.8 L5,4.1 Q5,5.1 4,5.1 L0.5,5.1"/><path transform="translate(12.60,0)" d="M1.9,0.5 L3.6,0.5 L5,1.9 L5,3.7 L3.6,5.1 L1.9,5.1 L0.5,3.7 L0.5,1.9 Z"/></g></g>
</svg>

<!-- status bar -->
<div class="a" style="left:69px;top:940px;width:1098px;height:13px;background:#474747;overflow:hidden">
 <div class="a" style="left:0;top:0;width:70px;height:13px;background:#5d5d5d"></div>
 <div class="a" style="left:70px;top:0;width:2px;height:13px;background:#3d3d3d"></div>
 <div class="a" style="left:72px;top:0;width:60px;height:13px;background:#5d5d5d"></div>
 <div class="a" style="left:132px;top:0;width:34px;height:13px;background:#414141"></div>
 <div class="a" style="left:166px;top:0;width:56px;height:13px;background:#5d5d5d"></div>
 <div class="a" style="left:222px;top:0;width:34px;height:13px;background:#414141"></div>
 <div class="a" style="left:256px;top:0;width:180px;height:13px;background:#5d5d5d"></div>
 <div class="a" style="left:439px;top:1px;width:14px;height:13px;background:#9a9a9a;border-radius:2px"></div>
 <div class="a" style="left:834px;top:1px;width:129px;height:13px;background:#727272;border-radius:4px"></div>
 <div class="a" style="will-change:transform;left:8px;top:3px;font-size:11px;line-height:14px;color:#dedede;white-space:nowrap;letter-spacing:-0.85px">63.22%</div>
 <div class="a" style="will-change:transform;left:80px;top:3px;font-size:11px;line-height:14px;color:#dedede;white-space:nowrap;letter-spacing:-0.9px">0.0°</div>
 <div class="a" style="will-change:transform;left:174px;top:3px;font-size:11px;line-height:14px;color:#dedede;white-space:nowrap">1</div>
 <div class="a" style="will-change:transform;left:262px;top:3px;font-size:11.4px;line-height:14px;color:#dedede;white-space:nowrap">Transform / Text on Path Tool /</div>
</div>
<svg class="a" style="left:0;top:0" width="1167" height="953">
 <g fill="none" stroke="#e6e6e6" stroke-width="1.5">
  <path d="M122.5,945.5 L128,951 L133.5,945.5"/>
  <path d="M184,945.5 L189.5,951 L195,945.5"/>
  <path d="M274.5,945.5 L280,951 L285.5,945.5"/>
  <path d="M488.5,945.5 L494,951 L499.5,945.5"/>
  <path d="M535.5,944.5 L530,949.5 L535.5,954.5"/>
 </g>
 <g fill="#dcdcdc">
  <rect x="206" y="944" width="2.5" height="10"/><path d="M215.5,944 L208.5,949.5 L215.5,955 Z"/>
  <path d="M230.5,944 L222.5,949.5 L230.5,955 Z"/>
  <path d="M295,944 L302.5,949.5 L295,955 Z"/>
  <path d="M309.5,944 L316.5,949.5 L309.5,955 Z"/><rect x="316.5" y="944" width="2.5" height="10"/>
 </g>
 <g fill="#3a3a3a"><rect x="510.5" y="944" width="9" height="1.6"/><rect x="514.2" y="946" width="1.6" height="5"/><path d="M511.5,949.5 L515,953 L518.5,949.5 Z"/></g>
 <g fill="#b8b8b8">
  <rect x="60.4" y="128.8" width="1.1" height="1.4"/><rect x="60.4" y="133.5" width="1.1" height="1.4"/><rect x="60.4" y="138.3" width="1.1" height="1.4"/><rect x="60.4" y="141.4" width="1.1" height="1.2"/><rect x="60.4" y="143.6" width="1.1" height="1.4"/><rect x="60.4" y="148" width="1.1" height="1.2"/>
  <rect x="49" y="141.5" width="1.4" height="1.1"/><rect x="53.3" y="141.5" width="1.4" height="1.1"/><rect x="57.8" y="141.5" width="1.6" height="1.1"/><rect x="62.5" y="141.5" width="1.6" height="1.1"/><rect x="66.8" y="141.5" width="1.2" height="1.1"/>
 </g>
</svg>
</body></html>
